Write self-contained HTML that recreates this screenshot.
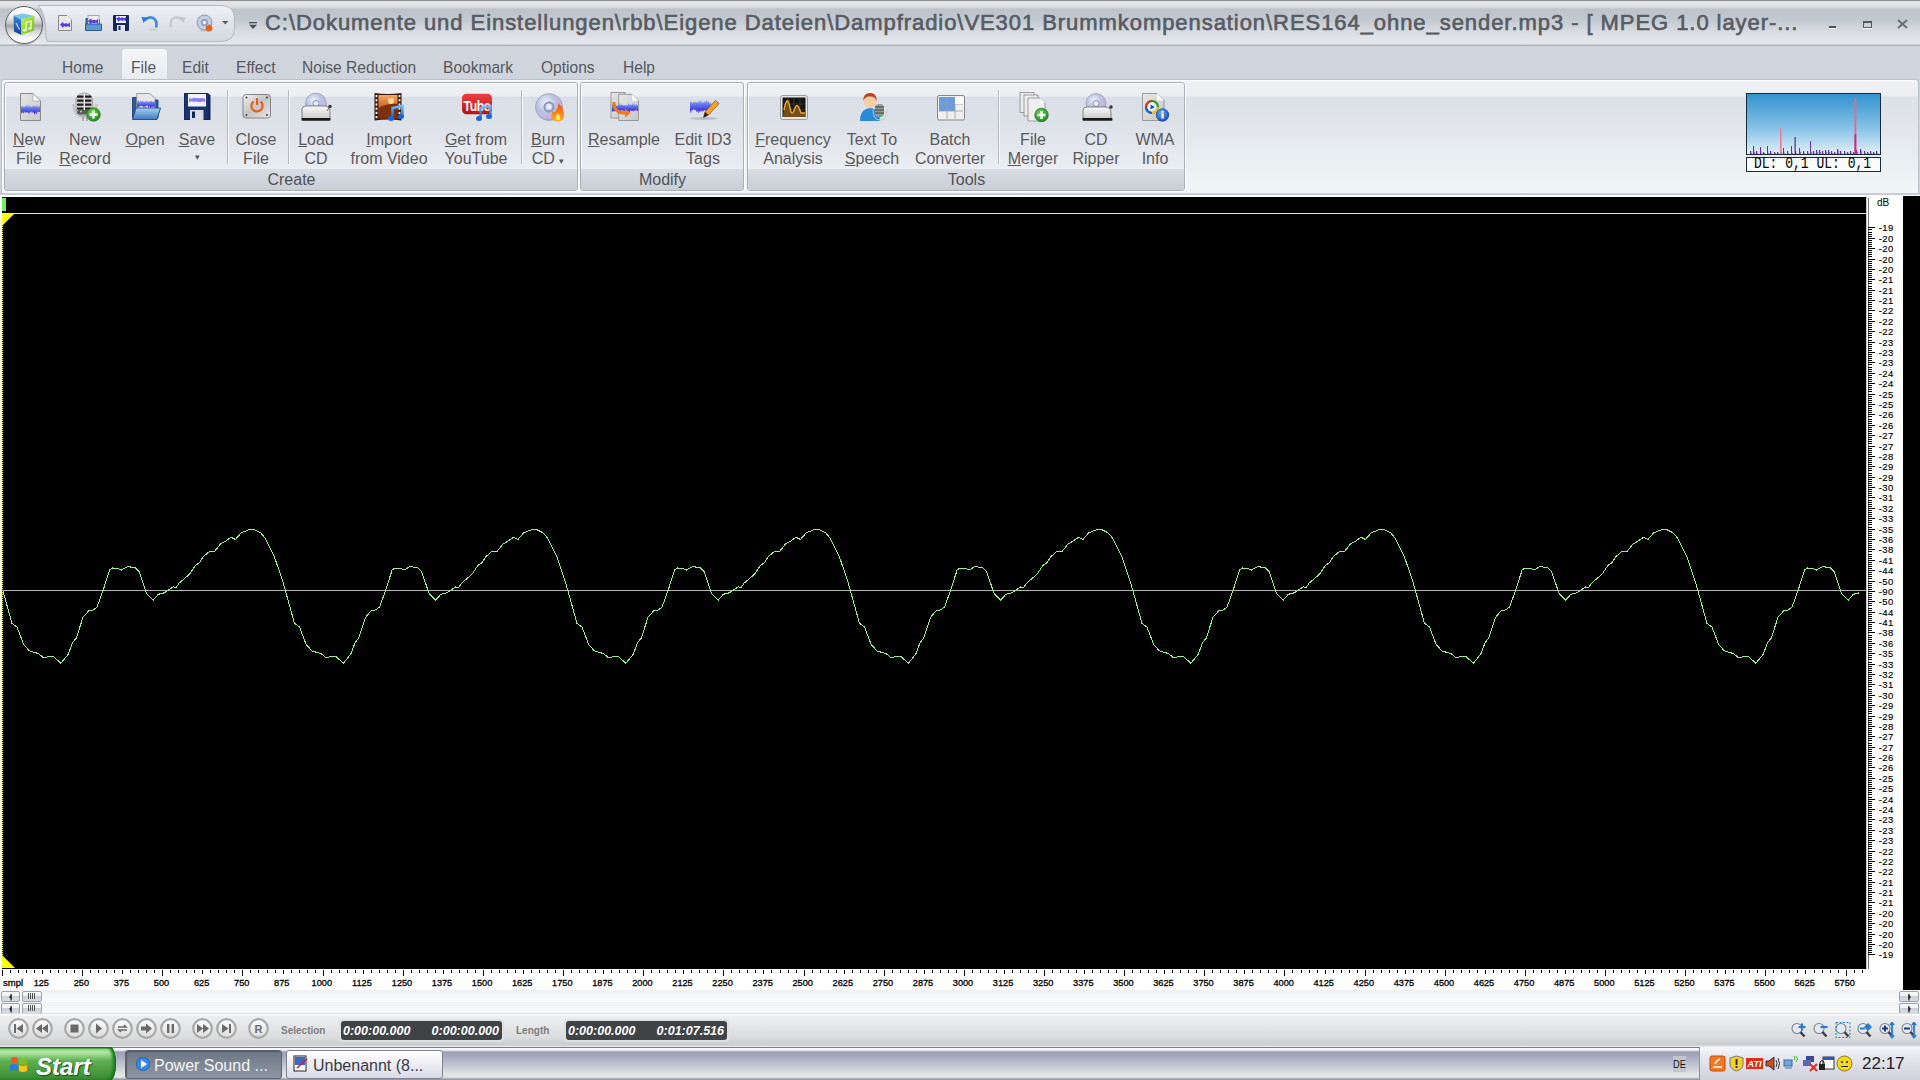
<!DOCTYPE html><html><head><meta charset="utf-8"><style>
*{margin:0;padding:0;box-sizing:border-box}
html,body{width:1920px;height:1080px;overflow:hidden;background:#d0d4dc;font-family:"Liberation Sans",sans-serif}
.a{position:absolute}
.t{position:absolute;white-space:nowrap;color:#4a4a4a}
.btn{position:absolute;text-align:center;color:#5a5a5a;font-size:16px;line-height:19px;white-space:nowrap}
.ic{position:absolute;width:32px;height:32px}
u{text-decoration:underline;text-underline-offset:1px;text-decoration-thickness:1px}
</style></head><body>
<div class="a" style="left:0;top:0;width:1920px;height:46px;background:linear-gradient(#8a8d92 0,#8a8d92 1px,#dcdee1 1px,#e5e6e9 2px,#dcdde1 7px,#d2d4d8 8px,#bcc3cb 9px,#c3c9d1 20px,#d6dae0 30px,#e6e9ee 44px,#aeb3ba 45px,#aeb3ba 46px)"></div>
<svg class="a" style="left:0;top:0" width="240" height="46" viewBox="0 0 240 46"><defs><linearGradient id="qg" x1="0" y1="0" x2="0" y2="1"><stop offset="0" stop-color="#eef1f4"/><stop offset="0.6" stop-color="#dde1e7"/><stop offset="1" stop-color="#d3d8df"/></linearGradient></defs><path d="M38 5.5 H221 Q234.5 5.5 234.5 19 V28 Q234.5 41.5 221 41.5 H48.5 Q46 41.5 46 36 Q46 12 38 5.5Z" fill="url(#qg)" stroke="#b3b9c1" stroke-width="1"/></svg>
<div class="a" style="left:5px;top:6px;width:38px;height:38px;border-radius:50%;background:linear-gradient(#ffffff 0,#f2f2f2 25%,#c8c8c8 45%,#a4a4a4 52%,#d4d4d4 66%,#f6f6f6 85%,#ffffff 100%);border:1.5px solid #5e6166;box-shadow:0 1px 1px rgba(0,0,0,0.2)"></div>
<svg class="a" style="left:12px;top:12px" width="24" height="25" viewBox="0 0 24 25"><defs><linearGradient id="cg" x1="0" y1="0" x2="1" y2="1"><stop offset="0" stop-color="#c8f050"/><stop offset="1" stop-color="#6ac01a"/></linearGradient><linearGradient id="cb" x1="0" y1="0" x2="0" y2="1"><stop offset="0" stop-color="#3a8ad8"/><stop offset="1" stop-color="#1a3aa0"/></linearGradient></defs><path d="M1.5 3.5 L11 1.5 L22.5 4 L9 7.5Z" fill="#7ac8e8"/><path d="M1.5 3.5 L9 7.5 L9.5 23 L2 19.5Z" fill="url(#cb)"/><path d="M9 7.5 L22.5 4 L22 18.5 L9.5 23Z" fill="url(#cg)"/><path d="M14 10.5 L19 9 V16" stroke="#f0ffe0" stroke-width="1.3" fill="none"/><path d="M14 10.5 V17.5" stroke="#f0ffe0" stroke-width="1.3"/><ellipse cx="12.8" cy="18.2" rx="1.8" ry="1.2" fill="#f0ffe0"/><ellipse cx="17.8" cy="16.6" rx="1.8" ry="1.2" fill="#f0ffe0"/><path d="M4 11 L7.5 17.5" stroke="#cde0ff" stroke-width="1.1"/></svg>
<svg class="a" style="left:57px;top:15px" width="16" height="16" viewBox="0 0 16 16"><path d="M1.5 0.5 H10 L14.5 5 V15.5 H1.5Z" fill="#e8e8e8" stroke="#8a8a8a"/><path d="M10 0.5 V5 H14.5Z" fill="#fff"/><g transform="translate(0 1.5)"><path d="M3 8 L6 5.5 L7 7.5 L9 6.5 L11 7.5 L13 6 V11 L11 9.5 L9 10.5 L7 9.5 L6 11.5Z" fill="#5a3ae8"/></g></svg>
<svg class="a" style="left:85px;top:15px" width="17" height="16" viewBox="0 0 17 16"><path d="M0.5 3 H5 L6 4.5 H15 V15.5 H0.5Z" fill="#2a5a9a"/><rect x="3" y="0.5" width="11" height="10" fill="#eee" stroke="#999" stroke-width="0.8"/><g transform="translate(0 -2)"><path d="M3 8 L6 5.5 L7 7.5 L9 6.5 L11 7.5 L13 6 V11 L11 9.5 L9 10.5 L7 9.5 L6 11.5Z" fill="#5a3ae8"/></g><path d="M0.5 15.5 V9 H16.5 V15.5Z" fill="#5a9ad0" stroke="#1a4a8a" stroke-width="0.8"/></svg>
<svg class="a" style="left:113px;top:15px" width="16" height="16" viewBox="0 0 16 16"><rect x="0" y="0" width="16" height="16" rx="1" fill="#14285e"/><rect x="3" y="1" width="10" height="7" fill="#eef0f8"/><g transform="translate(0 -3.5) scale(1 0.9)"><path d="M3 8 L6 5.5 L7 7.5 L9 6.5 L11 7.5 L13 6 V11 L11 9.5 L9 10.5 L7 9.5 L6 11.5Z" fill="#5a3ae8"/></g><rect x="4" y="10" width="8" height="6" fill="#e0e4ea"/><rect x="5.5" y="11" width="2" height="4" fill="#14285e"/></svg>
<svg class="a" style="left:141px;top:14px" width="17" height="17" viewBox="0 0 17 17"><path d="M4 6 Q9 1.5 13.5 5 Q16.5 8 15 13.5" stroke="#3a8ae0" stroke-width="2.6" fill="none"/><path d="M0.5 3 L7 3.5 L2.5 9Z" fill="#2a7ad8"/><ellipse cx="12" cy="15.5" rx="4" ry="0.8" fill="#999" opacity="0.4"/></svg>
<svg class="a" style="left:169px;top:14px" width="17" height="17" viewBox="0 0 17 17"><path d="M13 6 Q8 1.5 3.5 5 Q0.5 8 2 13.5" stroke="#c8ccd2" stroke-width="2.6" fill="none"/><path d="M16.5 3 L10 3.5 L14.5 9Z" fill="#c4c8ce"/></svg>
<svg class="a" style="left:196px;top:14px" width="18" height="18" viewBox="0 0 18 18"><circle cx="8.5" cy="8.5" r="7.5" fill="#c6cde2" stroke="#7a86a6" stroke-width="0.8"/><circle cx="8.5" cy="8.5" r="2.8" fill="none" stroke="#8a98c0" stroke-width="1.4"/><circle cx="8.5" cy="8.5" r="1.3" fill="#fff"/><path d="M10.5 17 Q9 13 11 11 Q12.5 12.5 13 10 Q16 11.5 16.5 14 Q16.5 17.5 13 17.5Z" fill="#f05a14"/><ellipse cx="9" cy="16.8" rx="6" ry="0.8" fill="#888" opacity="0.35"/></svg>
<svg class="a" style="left:222px;top:21px" width="7" height="4" viewBox="0 0 7 4"><path d="M0 0 H6.5 L3.25 3.5Z" fill="#5a5e66"/></svg>
<svg class="a" style="left:249px;top:22px" width="8" height="8" viewBox="0 0 8 8"><rect x="0" y="0" width="8" height="1.3" fill="#4e5258"/><path d="M0 2.8 H8 L4 7Z" fill="#4e5258"/></svg>
<div class="t" style="left:265px;top:12px;font-size:22px;line-height:22px;color:#585c63;letter-spacing:0.94px;-webkit-text-stroke:0.65px #585c63">C:\Dokumente und Einstellungen\rbb\Eigene Dateien\Dampfradio\VE301 Brummkompensation\RES164_ohne_sender.mp3 - [ MPEG 1.0 layer-...</div>
<div class="a" style="left:1829px;top:26px;width:7px;height:2px;background:#4f545b;box-shadow:0 1px 0 #fff"></div>
<div class="a" style="left:1863px;top:21px;width:9px;height:7px;border:1px solid #555a61;border-top-width:2px;box-shadow:0 1px 0 #fff"></div>
<svg class="a" style="left:1897px;top:19px" width="11" height="10" viewBox="0 0 11 10"><path d="M1 1 L10 9 M10 1 L1 9" stroke="#6a7078" stroke-width="2"/></svg>
<div class="a" style="left:121px;top:48px;width:47px;height:33px;border-radius:4px 4px 0 0;background:linear-gradient(#f3f5f7,#e8ebef);border:1px solid #c6d6de;border-bottom:none"></div>
<div class="t" style="left:62px;top:58px;font-size:17px;color:#55595f;transform:scaleX(0.915);transform-origin:0 0">Home</div>
<div class="t" style="left:131px;top:58px;font-size:17px;color:#55595f;transform:scaleX(0.915);transform-origin:0 0">File</div>
<div class="t" style="left:182px;top:58px;font-size:17px;color:#55595f;transform:scaleX(0.915);transform-origin:0 0">Edit</div>
<div class="t" style="left:236px;top:58px;font-size:17px;color:#55595f;transform:scaleX(0.915);transform-origin:0 0">Effect</div>
<div class="t" style="left:302px;top:58px;font-size:17px;color:#55595f;transform:scaleX(0.915);transform-origin:0 0">Noise Reduction</div>
<div class="t" style="left:443px;top:58px;font-size:17px;color:#55595f;transform:scaleX(0.915);transform-origin:0 0">Bookmark</div>
<div class="t" style="left:541px;top:58px;font-size:17px;color:#55595f;transform:scaleX(0.915);transform-origin:0 0">Options</div>
<div class="t" style="left:623px;top:58px;font-size:17px;color:#55595f;transform:scaleX(0.915);transform-origin:0 0">Help</div>
<div class="a" style="left:1px;top:79px;width:1918px;height:114px;border-radius:4px 4px 0 0;background:linear-gradient(#f4f6f8 0,#eef0f4 3px,#eceef2 16px,#dde1e8 17px,#e3e7ec 50px,#ecf1f4 90px,#f1f7f9 113px);border:1px solid #bcc1c8;border-bottom:none;box-shadow:inset 1px 1px 0 #fbfcfd"></div>
<div class="a" style="left:0;top:193px;width:1920px;height:3px;background:#c9cdd3"></div>
<div class="a" style="left:0;top:195px;width:1920px;height:2px;background:#ffffff"></div>
<div class="a" style="left:4px;top:82px;width:574px;height:109px;border-radius:3px;border:1px solid #aab0b8;background:linear-gradient(#eff1f4 0,#eceef2 13px,#dadee6 14px,#dde1e8 40px,#e6e9ee 70px,#eaedf1 86px);box-shadow:0 1px 0 #fff, 1px 0 0 #fff, inset 1px 1px 0 #fbfcfd"></div>
<div class="a" style="left:5px;top:169px;width:572px;height:21px;background:linear-gradient(#d8dce3,#c9ced7);border-radius:0 0 2px 2px"></div>
<div class="t" style="left:5px;width:573px;top:171px;text-align:center;font-size:16px;color:#4e5258">Create</div>
<div class="a" style="left:580px;top:82px;width:164px;height:109px;border-radius:3px;border:1px solid #aab0b8;background:linear-gradient(#eff1f4 0,#eceef2 13px,#dadee6 14px,#dde1e8 40px,#e6e9ee 70px,#eaedf1 86px);box-shadow:0 1px 0 #fff, 1px 0 0 #fff, inset 1px 1px 0 #fbfcfd"></div>
<div class="a" style="left:581px;top:169px;width:162px;height:21px;background:linear-gradient(#d8dce3,#c9ced7);border-radius:0 0 2px 2px"></div>
<div class="t" style="left:581px;width:163px;top:171px;text-align:center;font-size:16px;color:#4e5258">Modify</div>
<div class="a" style="left:747px;top:82px;width:438px;height:109px;border-radius:3px;border:1px solid #aab0b8;background:linear-gradient(#eff1f4 0,#eceef2 13px,#dadee6 14px,#dde1e8 40px,#e6e9ee 70px,#eaedf1 86px);box-shadow:0 1px 0 #fff, 1px 0 0 #fff, inset 1px 1px 0 #fbfcfd"></div>
<div class="a" style="left:748px;top:169px;width:436px;height:21px;background:linear-gradient(#d8dce3,#c9ced7);border-radius:0 0 2px 2px"></div>
<div class="t" style="left:748px;width:437px;top:171px;text-align:center;font-size:16px;color:#4e5258">Tools</div>
<div class="a" style="left:227px;top:90px;width:1px;height:74px;background:#b6bbc3;box-shadow:1px 0 0 #f6f7f9"></div>
<div class="a" style="left:288px;top:90px;width:1px;height:74px;background:#b6bbc3;box-shadow:1px 0 0 #f6f7f9"></div>
<div class="a" style="left:521px;top:90px;width:1px;height:74px;background:#b6bbc3;box-shadow:1px 0 0 #f6f7f9"></div>
<div class="a" style="left:998px;top:90px;width:1px;height:74px;background:#b6bbc3;box-shadow:1px 0 0 #f6f7f9"></div>
<div class="btn" style="left:-31px;width:120px;top:130px"><u>N</u>ew<br>File</div>
<div class="btn" style="left:25px;width:120px;top:130px">New<br><u>R</u>ecord</div>
<div class="btn" style="left:85px;width:120px;top:130px"><u>O</u>pen<br></div>
<div class="btn" style="left:137px;width:120px;top:130px"><u>S</u>ave<br><span style='font-size:9px;position:relative;top:-4px'>&#9662;</span></div>
<div class="btn" style="left:196px;width:120px;top:130px">Close<br>File</div>
<div class="btn" style="left:256px;width:120px;top:130px"><u>L</u>oad<br>CD</div>
<div class="btn" style="left:329px;width:120px;top:130px"><u>I</u>mport<br>from Video</div>
<div class="btn" style="left:416px;width:120px;top:130px"><u>G</u>et from<br>YouTube</div>
<div class="btn" style="left:488px;width:120px;top:130px"><u>B</u>urn<br>CD <span style='font-size:9px'>&#9662;</span></div>
<div class="btn" style="left:564px;width:120px;top:130px"><u>R</u>esample<br></div>
<div class="btn" style="left:643px;width:120px;top:130px">Edit ID3<br>Tags</div>
<div class="btn" style="left:733px;width:120px;top:130px"><u>F</u>requency<br>Analysis</div>
<div class="btn" style="left:812px;width:120px;top:130px">Text To<br><u>S</u>peech</div>
<div class="btn" style="left:890px;width:120px;top:130px">Batch<br>Converter</div>
<div class="btn" style="left:973px;width:120px;top:130px">File<br><u>M</u>erger</div>
<div class="btn" style="left:1036px;width:120px;top:130px">CD<br>Ripper</div>
<div class="btn" style="left:1095px;width:120px;top:130px">WMA<br>Info</div>
<svg class="a" style="left:0;top:80px" width="1200" height="50" viewBox="0 80 1200 50"><defs>
<linearGradient id="wg" x1="0" y1="0" x2="0" y2="1"><stop offset="0" stop-color="#9ab8f4"/><stop offset="0.45" stop-color="#5a6ae8"/><stop offset="1" stop-color="#3a10d0"/></linearGradient>
<linearGradient id="wg2" x1="0" y1="0" x2="1" y2="0"><stop offset="0" stop-color="#7a8ef0"/><stop offset="1" stop-color="#9a70f0"/></linearGradient>
<linearGradient id="pg" x1="0" y1="0" x2="1" y2="1"><stop offset="0" stop-color="#e6e6e6"/><stop offset="1" stop-color="#c8c8c8"/></linearGradient>
<linearGradient id="metal" x1="0" y1="0" x2="1" y2="1"><stop offset="0" stop-color="#f4f4f4"/><stop offset="0.5" stop-color="#c4c4c4"/><stop offset="1" stop-color="#e8e8e8"/></linearGradient>
<linearGradient id="fold" x1="0" y1="0" x2="0" y2="1"><stop offset="0" stop-color="#a8d0f0"/><stop offset="1" stop-color="#3e7cc0"/></linearGradient>
<radialGradient id="cd" cx="0.4" cy="0.35" r="0.7"><stop offset="0" stop-color="#f0f4ff"/><stop offset="0.5" stop-color="#b8c4e0"/><stop offset="0.8" stop-color="#c8b0e0"/><stop offset="1" stop-color="#8a9ab8"/></radialGradient>
<linearGradient id="drv" x1="0" y1="0" x2="0" y2="1"><stop offset="0" stop-color="#fafafa"/><stop offset="1" stop-color="#c8c8c8"/></linearGradient>
<linearGradient id="film" x1="0" y1="0" x2="0" y2="1"><stop offset="0" stop-color="#f0a868"/><stop offset="0.45" stop-color="#d86a28"/><stop offset="1" stop-color="#6a2a10"/></linearGradient>
<linearGradient id="note" x1="0" y1="0" x2="0" y2="1"><stop offset="0" stop-color="#6ac0ff"/><stop offset="1" stop-color="#1a5ad0"/></linearGradient>
<linearGradient id="yt" x1="0" y1="0" x2="0" y2="1"><stop offset="0" stop-color="#f04040"/><stop offset="1" stop-color="#b81010"/></linearGradient>
<radialGradient id="grn" cx="0.4" cy="0.35" r="0.7"><stop offset="0" stop-color="#6ad050"/><stop offset="1" stop-color="#1a8a1a"/></radialGradient>
<radialGradient id="blu" cx="0.4" cy="0.35" r="0.7"><stop offset="0" stop-color="#6aa8f0"/><stop offset="1" stop-color="#1a4ab8"/></radialGradient>
<linearGradient id="flame" x1="0" y1="0" x2="0" y2="1"><stop offset="0" stop-color="#f04a10"/><stop offset="1" stop-color="#ffb020"/></linearGradient>
</defs><path d="M20.5 93.5 H33 L40.5 101 V120.5 H20.5Z" fill="url(#pg)" stroke="#8a8a8a"/><path d="M33 93.5 V101 H40.5Z" fill="#f8f8f8" stroke="#9a9a9a" stroke-width="0.6"/><polygon points="21.0,105.8 21.9,106.8 22.8,105.2 23.7,107.6 24.6,106.6 25.5,106.5 26.4,104.6 27.3,106.5 28.2,104.7 29.1,106.7 30.0,105.2 31.0,106.9 31.9,106.5 32.8,106.6 33.7,104.9 34.6,106.4 35.5,105.4 36.4,106.8 37.3,104.7 38.2,107.5 39.1,104.9 40.0,106.8 40.0,112.6 39.1,111.6 38.2,112.1 37.3,111.4 36.4,114.5 35.5,112.5 34.6,114.8 33.7,112.3 32.8,112.9 31.9,111.1 31.0,113.0 30.0,111.4 29.1,114.0 28.2,112.6 27.3,112.5 26.4,111.9 25.5,112.9 24.6,111.3 23.7,113.7 22.8,111.4 21.9,113.7 21.0,112.3" fill="url(#wg)"/><path d="M73.5 104 Q73.5 117 85 117 Q96.5 117 96.5 104" stroke="#c4c4c4" stroke-width="2.2" fill="none"/><rect x="82" y="116" width="2" height="5" fill="#aaa"/><rect x="86" y="116" width="2" height="5" fill="#aaa"/><rect x="76" y="93" width="16.5" height="22.5" rx="7.5" fill="#d0d0d0" stroke="#777" stroke-width="0.6"/><rect x="77" y="95.5" width="14.5" height="2.2" rx="1" fill="#1e1e1e"/><rect x="77" y="99.5" width="14.5" height="2.2" rx="1" fill="#1e1e1e"/><rect x="77" y="103.5" width="14.5" height="2.2" rx="1" fill="#1e1e1e"/><rect x="77" y="107.5" width="14.5" height="2.2" rx="1" fill="#1e1e1e"/><rect x="83.6" y="94" width="1.4" height="20" fill="#f4f4f4"/><rect x="77" y="110" width="14.5" height="4.5" rx="2" fill="#5a5a5a"/><circle cx="81" cy="111.5" r="1" fill="#8af07a"/><circle cx="93.5" cy="114.5" r="6.8" fill="url(#grn)" stroke="#1a6a1a" stroke-width="0.6"/><path d="M93.5 110.5 V118.5 M89.5 114.5 H97.5" stroke="#fff" stroke-width="2.4"/><path d="M132.5 97.5 H139 L141 100 H158 V118 H132.5Z" fill="#2a5a9a" stroke="#1a3a6a" stroke-width="0.8"/><path d="M136.7 93.5 H150 L155 98.5 V113 H136.7Z" fill="#e6e6e6" stroke="#8a8a8a" stroke-width="0.8"/><polygon points="137.0,99.9 137.9,101.4 138.8,100.2 139.7,102.4 140.6,100.3 141.5,101.6 142.4,100.7 143.3,101.5 144.2,101.6 145.1,102.0 146.0,100.4 146.9,101.9 147.8,100.7 148.7,102.2 149.6,101.1 150.5,101.1 151.4,101.0 152.3,101.8 153.2,101.6 154.1,101.9 155.0,100.0 155.0,105.7 154.1,107.7 153.2,106.1 152.3,107.4 151.4,106.5 150.5,108.4 149.6,105.9 148.7,107.9 147.8,105.5 146.9,106.0 146.0,105.6 145.1,108.1 144.2,105.9 143.3,107.6 142.4,105.8 141.5,106.1 140.6,105.8 139.7,106.7 138.8,106.3 137.9,108.3 137.0,106.5" fill="url(#wg)"/><path d="M132.5 119.5 L136 108 H160.5 L157 119.5Z" fill="url(#fold)" stroke="#1a4a8a" stroke-width="0.9"/><path d="M184 93 H208 L210.5 95.5 V120 H184Z" fill="#14285e"/><rect x="185" y="94" width="23" height="25" fill="#1e3a7a" opacity="0.6"/><rect x="188" y="94" width="18" height="12.5" fill="#f2f2f8"/><polygon points="189.0,97.4 189.9,98.6 190.9,98.5 191.8,98.5 192.8,97.8 193.7,98.7 194.6,97.1 195.6,98.2 196.5,98.1 197.5,98.6 198.4,97.8 199.4,98.5 200.3,98.2 201.2,98.2 202.2,97.8 203.1,98.7 204.1,98.3 205.0,98.7 205.0,102.7 204.1,101.4 203.1,101.6 202.2,101.1 201.2,102.8 200.3,101.4 199.4,102.5 198.4,101.4 197.5,102.5 196.5,101.1 195.6,101.7 194.6,101.5 193.7,102.0 192.8,101.4 191.8,101.3 190.9,101.3 189.9,102.8 189.0,101.5" fill="url(#wg2)"/><rect x="190" y="110" width="13.5" height="10" fill="#d8dce4"/><rect x="192" y="111.5" width="3" height="6.5" fill="#14285e"/><rect x="243" y="94.5" width="27.5" height="23.5" rx="3" fill="url(#metal)" stroke="#7a7a7a" stroke-width="0.9"/><circle cx="246.5" cy="97.5" r="0.9" fill="#333"/><circle cx="267" cy="97.5" r="0.9" fill="#333"/><circle cx="246.5" cy="115" r="0.9" fill="#333"/><circle cx="267" cy="115" r="0.9" fill="#333"/><path d="M253.5 101.5 A5.6 5.6 0 1 0 260.5 101.5" stroke="#e0621a" stroke-width="2.2" fill="none"/><rect x="255.9" y="98" width="2.2" height="7" fill="#e0621a"/><circle cx="316" cy="103.5" r="10.5" fill="url(#cd)" stroke="#8a92aa" stroke-width="0.6"/><circle cx="316" cy="103.5" r="3" fill="#e8ecf4" stroke="#8a92b0"/><path d="M302 109 Q302 106 306 106 H324 Q330 106 330 112 V119 H302Z" fill="url(#drv)" stroke="#6a6a6a" stroke-width="0.8"/><rect x="301.5" y="118" width="29" height="2.8" rx="1" fill="#1a1a1a"/><circle cx="330" cy="106.5" r="1.7" fill="#333"/><path d="M330 106.5 L327 111" stroke="#555" stroke-width="0.8"/><path d="M374.5 93 Q388 95 401.5 93 V120.5 Q388 118.5 374.5 120.5Z" fill="#3a1a0a"/><rect x="378.5" y="95" width="19" height="23.5" fill="url(#film)"/><path d="M378.5 108 Q388 103 397.5 104 V118.5 H378.5Z" fill="#7a3210"/><circle cx="391" cy="101" r="3" fill="#ffe0a0" opacity="0.9"/><rect x="375.6" y="95.0" width="1.8" height="2.2" fill="#f0f0f0"/><rect x="398.6" y="95.0" width="1.8" height="2.2" fill="#f0f0f0"/><rect x="375.6" y="99.2" width="1.8" height="2.2" fill="#f0f0f0"/><rect x="398.6" y="99.2" width="1.8" height="2.2" fill="#f0f0f0"/><rect x="375.6" y="103.4" width="1.8" height="2.2" fill="#f0f0f0"/><rect x="398.6" y="103.4" width="1.8" height="2.2" fill="#f0f0f0"/><rect x="375.6" y="107.6" width="1.8" height="2.2" fill="#f0f0f0"/><rect x="398.6" y="107.6" width="1.8" height="2.2" fill="#f0f0f0"/><rect x="375.6" y="111.8" width="1.8" height="2.2" fill="#f0f0f0"/><rect x="398.6" y="111.8" width="1.8" height="2.2" fill="#f0f0f0"/><rect x="375.6" y="116.0" width="1.8" height="2.2" fill="#f0f0f0"/><rect x="398.6" y="116.0" width="1.8" height="2.2" fill="#f0f0f0"/><path d="M392.5 118 V108 L402.5 106 V116" stroke="url(#note)" stroke-width="2.4" fill="none"/><ellipse cx="391.0" cy="118.5" rx="3" ry="2.5" fill="#1a66d8"/><ellipse cx="401.0" cy="116.5" rx="3" ry="2.5" fill="#1a66d8"/><rect x="462" y="93.8" width="30" height="20.5" rx="4.5" fill="url(#yt)"/><text x="463.5" y="111" font-family="Liberation Sans" font-weight="bold" font-size="15" fill="#fff" transform="translate(463.5 0) scale(0.82 1) translate(-463.5 0)" letter-spacing="-0.5">Tube</text><path d="M480.5 118 V108 L490.5 106 V116" stroke="url(#note)" stroke-width="2.4" fill="none"/><ellipse cx="479.0" cy="118.5" rx="3" ry="2.5" fill="#1a66d8"/><ellipse cx="489.0" cy="116.5" rx="3" ry="2.5" fill="#1a66d8"/><circle cx="549" cy="107" r="13.5" fill="url(#cd)" stroke="#8a92aa" stroke-width="0.6"/><circle cx="549" cy="107" r="4.5" fill="none" stroke="#8a98c0" stroke-width="2"/><circle cx="549" cy="107" r="2.2" fill="#e8ecf4"/><path d="M553 120.5 Q550 115 553 111 Q555 114 556 110 Q559 107 558 103 Q564 108 564 115 Q564 121 558 121.5Z" fill="url(#flame)"/><path d="M556 120 Q555 116 558 113 Q561 117 560 120Z" fill="#ffe060"/><rect x="611" y="92.5" width="14" height="25.5" fill="url(#pg)" stroke="#8a8a8a" stroke-width="0.8"/><path d="M618.7 94.3 H632 L638.5 100.8 V120.5 H618.7Z" fill="url(#pg)" stroke="#8a8a8a" stroke-width="0.8"/><path d="M632 94.3 V100.8 H638.5Z" fill="#fafafa"/><polygon points="612.0,103.6 612.9,104.7 613.9,103.9 614.8,105.8 615.7,104.1 616.6,106.1 617.6,105.4 618.5,105.3 619.4,102.7 620.4,105.0 621.3,104.6 622.2,105.1 623.1,104.7 624.1,105.9 625.0,104.4 625.9,105.7 626.9,104.5 627.8,105.6 628.7,102.8 629.6,104.9 630.6,104.2 631.5,105.3 632.4,103.0 633.4,105.0 634.3,103.0 635.2,106.1 636.1,103.7 637.1,105.1 638.0,105.3 638.0,110.4 637.1,111.1 636.1,110.0 635.2,110.6 634.3,110.6 633.4,111.4 632.4,110.4 631.5,110.9 630.6,110.3 629.6,112.4 628.7,110.9 627.8,110.9 626.9,110.2 625.9,111.6 625.0,110.6 624.1,111.6 623.1,110.2 622.2,110.8 621.3,110.1 620.4,112.2 619.4,110.9 618.5,110.4 617.6,110.4 616.6,110.7 615.7,110.5 614.8,111.6 613.9,110.5 612.9,111.9 612.0,110.8" fill="url(#wg)"/><path d="M614 102 Q613 113 626 113" stroke="#f07a1a" stroke-width="3.2" fill="none"/><path d="M625 108.5 L630.5 113 L625 117.5Z" fill="#f07a1a"/><ellipse cx="704" cy="118.5" rx="14" ry="1.5" fill="#777" opacity="0.35"/><polygon points="690.0,101.1 690.9,102.2 691.8,102.1 692.7,103.5 693.7,100.9 694.6,103.1 695.5,101.8 696.4,102.1 697.3,102.3 698.2,103.0 699.1,99.5 700.0,102.4 701.0,99.9 701.9,103.6 702.8,101.3 703.7,102.7 704.6,101.1 705.5,102.6 706.4,99.2 707.3,102.0 708.3,101.0 709.2,103.7 710.1,101.6 711.0,103.3 711.0,111.6 710.1,109.1 709.2,111.6 708.3,110.0 707.3,112.5 706.4,110.6 705.5,110.8 704.6,110.0 703.7,111.5 702.8,110.0 701.9,112.2 701.0,109.9 700.0,112.5 699.1,110.5 698.2,113.8 697.3,109.8 696.4,112.3 695.5,109.7 694.6,110.3 693.7,108.9 692.7,110.4 691.8,109.5 690.9,113.5 690.0,110.6" fill="url(#wg)"/><path d="M703.5 117.5 L705 112 L715.5 100.5 L719 103.5 L708.5 115Z" fill="#f2a628" stroke="#a05010" stroke-width="0.8"/><path d="M703.5 117.5 L705 112 L708.5 115Z" fill="#222"/><rect x="780.5" y="95.5" width="27" height="24" rx="2" fill="#e6e6e6" stroke="#8a8a8a" stroke-width="0.8"/><rect x="782.5" y="97.5" width="23" height="19.5" fill="#141414"/><path d="M782.5 104 H805.5 M782.5 110 H805.5 M788 97.5 V117 M794 97.5 V117 M800 97.5 V117" stroke="#4a4a3a" stroke-width="0.6"/><path d="M782.5 117 L784 110 Q786 99 788 101 Q790 106 791 112 Q793 115 795 108 Q797 103 799 108 L801 113 H805.5 V117Z" fill="#8a5a1a" opacity="0.8"/><path d="M784 110 Q786 99 788 101 Q790 106 791 112 Q793 115 795 108 Q797 103 799 108 L801 113 L805 113" stroke="#f0a830" stroke-width="1.4" fill="none"/><path d="M860 121 Q860 109 870 108 Q880 109 880 121Z" fill="#2a8ad8"/><circle cx="870" cy="102" r="6" fill="#f6cfa0"/><path d="M863.5 101 Q863 93 870 93 Q877 93 876.5 101 Q875 96 870 96.5 Q865 96 863.5 101Z" fill="#b8401a"/><rect x="875" y="104" width="9" height="13" rx="4" fill="#9a9a9a"/><path d="M875 107 H884 M875 110 H884 M875 113 H884" stroke="#333" stroke-width="0.9"/><circle cx="880" cy="116" r="1.4" fill="#3ad03a"/><path d="M873 110 Q873 120 880 120 Q887 120 887 110" stroke="#ccc" fill="none"/><rect x="937.5" y="95.5" width="27" height="24.5" rx="1.5" fill="#f0f0f0" stroke="#7a7a7a" stroke-width="0.9"/><rect x="939" y="97" width="16" height="14" fill="#6a9ae0"/><path d="M939 104 H963 M939 111 H963 M947 97 V119 M955 97 V119" stroke="#9aa0a8" stroke-width="0.8"/><path d="M955 97 H963 V104 H955Z" fill="#fafafa"/><rect x="1020" y="92.5" width="14" height="20" fill="#ececec" stroke="#8a8a8a" stroke-width="0.8"/><rect x="1024" y="95" width="14" height="21" fill="#ececec" stroke="#8a8a8a" stroke-width="0.8"/><path d="M1028 98 H1040 L1045 103 V121 H1028Z" fill="#efefef" stroke="#8a8a8a" stroke-width="0.8"/><path d="M1040 98 V103 H1045Z" fill="#fff"/><circle cx="1041.5" cy="115" r="6.8" fill="url(#grn)" stroke="#1a6a1a" stroke-width="0.6"/><path d="M1041.5 111 V119 M1037.5 115 H1045.5" stroke="#fff" stroke-width="2.4"/><circle cx="1096" cy="103.5" r="10" fill="url(#cd)" stroke="#8a92aa" stroke-width="0.6"/><circle cx="1096" cy="103.5" r="3" fill="#e8ecf4" stroke="#8a92b0"/><path d="M1083 110 Q1083 107 1087 107 H1105 Q1111 107 1111 113 V119 H1083Z" fill="url(#drv)" stroke="#6a6a6a" stroke-width="0.8"/><rect x="1082.5" y="118" width="30" height="2.8" rx="1" fill="#1a1a1a"/><circle cx="1111" cy="107" r="1.7" fill="#333"/><path d="M1142.5 93.5 H1157 L1164 100.5 V120.5 H1142.5Z" fill="url(#pg)" stroke="#8a8a8a" stroke-width="0.8"/><path d="M1157 93.5 V100.5 H1164Z" fill="#fafafa"/><circle cx="1152" cy="107" r="6" fill="none" stroke="#2a9a2a" stroke-width="2.2"/><path d="M1146 107 A6 6 0 0 1 1152 101" stroke="#e03020" stroke-width="2.2" fill="none"/><path d="M1152 113 A6 6 0 0 1 1146 107" stroke="#2a5ad0" stroke-width="2.2" fill="none"/><path d="M1158 107 A6 6 0 0 1 1152 113" stroke="#f0c020" stroke-width="2.2" fill="none"/><circle cx="1152" cy="107" r="4" fill="#fff"/><path d="M1150.5 104.5 L1155 107 L1150.5 109.5Z" fill="#1a4ac0"/><circle cx="1162.5" cy="115" r="6.3" fill="url(#blu)" stroke="#103a90" stroke-width="0.6"/><rect x="1161.5" y="113.5" width="2.2" height="5" fill="#fff"/><rect x="1161.5" y="110.8" width="2.2" height="2" fill="#fff"/></svg>
<div class="a" style="left:1746px;top:93px;width:135px;height:62px;border:1px solid #1b2a38;background:linear-gradient(#3394cf,#8cc5e8 60%,#e2f0f8)"></div>
<svg class="a" style="left:1747px;top:94px" width="133" height="60" viewBox="0 0 133 60"><rect x="3" y="57" width="1.2" height="3" fill="#6a2aa8"/><rect x="4.2" y="59" width="1" height="1" fill="#9a50d0"/><rect x="6" y="56" width="1.2" height="4" fill="#6a2aa8"/><rect x="7.2" y="58" width="1" height="2" fill="#9a50d0"/><rect x="6" y="52" width="1" height="8" fill="#6a2aa8"/><rect x="9" y="57" width="1.2" height="3" fill="#6a2aa8"/><rect x="10.2" y="59" width="1" height="1" fill="#9a50d0"/><rect x="13" y="57" width="1.2" height="3" fill="#6a2aa8"/><rect x="14.2" y="59" width="1" height="1" fill="#9a50d0"/><rect x="13" y="53" width="1" height="7" fill="#6a2aa8"/><rect x="16" y="58" width="1.2" height="2" fill="#6a2aa8"/><rect x="17.2" y="59" width="1" height="1" fill="#9a50d0"/><rect x="20" y="57" width="1.2" height="3" fill="#6a2aa8"/><rect x="21.2" y="59" width="1" height="1" fill="#9a50d0"/><rect x="20" y="52" width="1" height="8" fill="#6a2aa8"/><rect x="23" y="57" width="1.2" height="3" fill="#6a2aa8"/><rect x="24.2" y="59" width="1" height="1" fill="#9a50d0"/><rect x="27" y="58" width="1.2" height="2" fill="#6a2aa8"/><rect x="28.2" y="59" width="1" height="1" fill="#9a50d0"/><rect x="30" y="58" width="1.2" height="2" fill="#6a2aa8"/><rect x="31.2" y="59" width="1" height="1" fill="#9a50d0"/><rect x="33" y="56" width="1.2" height="4" fill="#6a2aa8"/><rect x="34.2" y="58" width="1" height="2" fill="#9a50d0"/><rect x="36" y="57" width="1.2" height="3" fill="#6a2aa8"/><rect x="37.2" y="59" width="1" height="1" fill="#9a50d0"/><rect x="36" y="54" width="1" height="6" fill="#6a2aa8"/><rect x="40" y="57" width="1.2" height="3" fill="#6a2aa8"/><rect x="41.2" y="59" width="1" height="1" fill="#9a50d0"/><rect x="44" y="57" width="1.2" height="3" fill="#6a2aa8"/><rect x="45.2" y="59" width="1" height="1" fill="#9a50d0"/><rect x="44" y="52" width="1" height="8" fill="#6a2aa8"/><rect x="48" y="57" width="1.2" height="3" fill="#6a2aa8"/><rect x="49.2" y="59" width="1" height="1" fill="#9a50d0"/><rect x="52" y="56" width="1.2" height="4" fill="#6a2aa8"/><rect x="53.2" y="58" width="1" height="2" fill="#9a50d0"/><rect x="52" y="54" width="1" height="6" fill="#6a2aa8"/><rect x="56" y="57" width="1.2" height="3" fill="#6a2aa8"/><rect x="57.2" y="59" width="1" height="1" fill="#9a50d0"/><rect x="60" y="57" width="1.2" height="3" fill="#6a2aa8"/><rect x="61.2" y="59" width="1" height="1" fill="#9a50d0"/><rect x="63" y="56" width="1.2" height="4" fill="#6a2aa8"/><rect x="64.2" y="58" width="1" height="2" fill="#9a50d0"/><rect x="66" y="57" width="1.2" height="3" fill="#6a2aa8"/><rect x="67.2" y="59" width="1" height="1" fill="#9a50d0"/><rect x="69" y="56" width="1.2" height="4" fill="#6a2aa8"/><rect x="70.2" y="58" width="1" height="2" fill="#9a50d0"/><rect x="72" y="56" width="1.2" height="4" fill="#6a2aa8"/><rect x="73.2" y="58" width="1" height="2" fill="#9a50d0"/><rect x="75" y="57" width="1.2" height="3" fill="#6a2aa8"/><rect x="76.2" y="59" width="1" height="1" fill="#9a50d0"/><rect x="78" y="56" width="1.2" height="4" fill="#6a2aa8"/><rect x="79.2" y="58" width="1" height="2" fill="#9a50d0"/><rect x="81" y="56" width="1.2" height="4" fill="#6a2aa8"/><rect x="82.2" y="58" width="1" height="2" fill="#9a50d0"/><rect x="84" y="57" width="1.2" height="3" fill="#6a2aa8"/><rect x="85.2" y="59" width="1" height="1" fill="#9a50d0"/><rect x="87" y="58" width="1.2" height="2" fill="#6a2aa8"/><rect x="88.2" y="59" width="1" height="1" fill="#9a50d0"/><rect x="90" y="55" width="1.2" height="5" fill="#6a2aa8"/><rect x="91.2" y="57" width="1" height="3" fill="#9a50d0"/><rect x="93" y="57" width="1.2" height="3" fill="#6a2aa8"/><rect x="94.2" y="59" width="1" height="1" fill="#9a50d0"/><rect x="97" y="57" width="1.2" height="3" fill="#6a2aa8"/><rect x="98.2" y="59" width="1" height="1" fill="#9a50d0"/><rect x="100" y="58" width="1.2" height="2" fill="#6a2aa8"/><rect x="101.2" y="59" width="1" height="1" fill="#9a50d0"/><rect x="103" y="57" width="1.2" height="3" fill="#6a2aa8"/><rect x="104.2" y="59" width="1" height="1" fill="#9a50d0"/><rect x="106" y="58" width="1.2" height="2" fill="#6a2aa8"/><rect x="107.2" y="59" width="1" height="1" fill="#9a50d0"/><rect x="109" y="56" width="1.2" height="4" fill="#6a2aa8"/><rect x="110.2" y="58" width="1" height="2" fill="#9a50d0"/><rect x="113" y="55" width="1.2" height="5" fill="#6a2aa8"/><rect x="114.2" y="57" width="1" height="3" fill="#9a50d0"/><rect x="117" y="57" width="1.2" height="3" fill="#6a2aa8"/><rect x="118.2" y="59" width="1" height="1" fill="#9a50d0"/><rect x="120" y="58" width="1.2" height="2" fill="#6a2aa8"/><rect x="121.2" y="59" width="1" height="1" fill="#9a50d0"/><rect x="123" y="57" width="1.2" height="3" fill="#6a2aa8"/><rect x="124.2" y="59" width="1" height="1" fill="#9a50d0"/><rect x="126" y="58" width="1.2" height="2" fill="#6a2aa8"/><rect x="127.2" y="59" width="1" height="1" fill="#9a50d0"/><rect x="129" y="57" width="1.2" height="3" fill="#6a2aa8"/><rect x="130.2" y="59" width="1" height="1" fill="#9a50d0"/><rect x="33" y="34" width="1.6" height="26" fill="#f07a9a"/><rect x="47.5" y="43" width="1.2" height="17" fill="#5a2a7a"/><rect x="63" y="47" width="1" height="13" fill="#6a34b0"/><rect x="107.5" y="4" width="1.8" height="56" fill="#e86a8a"/><rect x="107.5" y="40" width="1.8" height="20" fill="#c02a8a"/></svg>
<div class="a" style="left:1746px;top:157px;width:135px;height:15px;border:1px solid #1b2a38;background:#fafcfc"></div>
<div class="t" style="left:1754px;top:154px;font-family:'Liberation Mono',monospace;font-size:17px;line-height:20px;color:#000;transform:scaleX(0.765);transform-origin:0 0">DL: 0,1 UL: 0,1</div><div class="a" style="left:0;top:196px;width:1920px;height:773px;background:#fff"></div>
<div class="a" style="left:2px;top:197px;width:1865px;height:772px;background:#000"></div>
<div class="a" style="left:2px;top:198px;width:4px;height:13px;background:#6cf05a"></div>
<div class="a" style="left:2px;top:213px;width:1865px;height:1px;background:#e8e8e8"></div>
<svg class="a" style="left:0;top:196px" width="1920" height="773" viewBox="0 196 1920 773"><path d="M2 214 H14 L2 226Z" fill="#ffff00"/><path d="M2 968 V955 L15 968Z" fill="#ffff00"/><line x1="2.5" y1="226" x2="2.5" y2="955" stroke="#ffff00" stroke-width="1" stroke-dasharray="1 1"/><line x1="2" y1="590.5" x2="1866" y2="590.5" stroke="#b4b4b4" stroke-width="1"/><polyline points="3.0,591.0 11.9,623.2 17.0,627.0 23.7,644.7 29.6,651.0 38.5,653.6 43.0,657.3 53.4,656.5 60.8,663.2 68.2,654.3 72.6,642.5 76.3,638.0 83.0,617.3 88.9,610.6 93.4,609.9 97.1,606.9 103.0,590.6 109.7,569.8 112.6,568.0 118.6,568.7 121.5,570.0 127.5,566.6 134.9,567.6 139.3,572.0 146.0,592.0 147.2,594.3 153.2,600.2 158.3,594.3 164.3,592.8 173.2,586.9 176.1,587.6 179.1,583.2 185.0,578.0 189.5,574.3 195.4,565.4 199.8,562.4 202.8,557.2 208.7,552.0 214.7,551.3 220.6,543.9 225.8,541.0 231.0,537.2 235.4,539.5 241.3,532.8 248.7,529.8 254.7,529.8 260.6,532.8 265.0,538.0 268.0,543.9 274.0,555.8 278.4,568.4 282.8,581.7 285.5,591.0 294.4,623.2 299.5,627.0 306.2,644.7 312.1,651.0 321.0,653.6 325.5,657.3 335.9,656.5 343.3,663.2 350.7,654.3 355.1,642.5 358.8,638.0 365.5,617.3 371.4,610.6 375.9,609.9 379.6,606.9 385.5,590.6 392.2,569.8 395.1,568.0 401.1,568.7 404.0,570.0 410.0,566.6 417.4,567.6 421.8,572.0 428.5,592.0 429.7,594.3 435.7,600.2 440.8,594.3 446.8,592.8 455.7,586.9 458.6,587.6 461.6,583.2 467.5,578.0 472.0,574.3 477.9,565.4 482.3,562.4 485.3,557.2 491.2,552.0 497.2,551.3 503.1,543.9 508.3,541.0 513.5,537.2 517.9,539.5 523.8,532.8 531.2,529.8 537.2,529.8 543.1,532.8 547.5,538.0 550.5,543.9 556.5,555.8 560.9,568.4 565.3,581.7 568.0,591.0 576.9,623.2 582.0,627.0 588.7,644.7 594.6,651.0 603.5,653.6 608.0,657.3 618.4,656.5 625.8,663.2 633.2,654.3 637.6,642.5 641.3,638.0 648.0,617.3 653.9,610.6 658.4,609.9 662.1,606.9 668.0,590.6 674.7,569.8 677.6,568.0 683.6,568.7 686.5,570.0 692.5,566.6 699.9,567.6 704.3,572.0 711.0,592.0 712.2,594.3 718.2,600.2 723.3,594.3 729.3,592.8 738.2,586.9 741.1,587.6 744.1,583.2 750.0,578.0 754.5,574.3 760.4,565.4 764.8,562.4 767.8,557.2 773.7,552.0 779.7,551.3 785.6,543.9 790.8,541.0 796.0,537.2 800.4,539.5 806.3,532.8 813.7,529.8 819.7,529.8 825.6,532.8 830.0,538.0 833.0,543.9 839.0,555.8 843.4,568.4 847.8,581.7 850.5,591.0 859.4,623.2 864.5,627.0 871.2,644.7 877.1,651.0 886.0,653.6 890.5,657.3 900.9,656.5 908.3,663.2 915.7,654.3 920.1,642.5 923.8,638.0 930.5,617.3 936.4,610.6 940.9,609.9 944.6,606.9 950.5,590.6 957.2,569.8 960.1,568.0 966.1,568.7 969.0,570.0 975.0,566.6 982.4,567.6 986.8,572.0 993.5,592.0 994.7,594.3 1000.7,600.2 1005.8,594.3 1011.8,592.8 1020.7,586.9 1023.6,587.6 1026.6,583.2 1032.5,578.0 1037.0,574.3 1042.9,565.4 1047.3,562.4 1050.3,557.2 1056.2,552.0 1062.2,551.3 1068.1,543.9 1073.3,541.0 1078.5,537.2 1082.9,539.5 1088.8,532.8 1096.2,529.8 1102.2,529.8 1108.1,532.8 1112.5,538.0 1115.5,543.9 1121.5,555.8 1125.9,568.4 1130.3,581.7 1133.0,591.0 1141.9,623.2 1147.0,627.0 1153.7,644.7 1159.6,651.0 1168.5,653.6 1173.0,657.3 1183.4,656.5 1190.8,663.2 1198.2,654.3 1202.6,642.5 1206.3,638.0 1213.0,617.3 1218.9,610.6 1223.4,609.9 1227.1,606.9 1233.0,590.6 1239.7,569.8 1242.6,568.0 1248.6,568.7 1251.5,570.0 1257.5,566.6 1264.9,567.6 1269.3,572.0 1276.0,592.0 1277.2,594.3 1283.2,600.2 1288.3,594.3 1294.3,592.8 1303.2,586.9 1306.1,587.6 1309.1,583.2 1315.0,578.0 1319.5,574.3 1325.4,565.4 1329.8,562.4 1332.8,557.2 1338.7,552.0 1344.7,551.3 1350.6,543.9 1355.8,541.0 1361.0,537.2 1365.4,539.5 1371.3,532.8 1378.7,529.8 1384.7,529.8 1390.6,532.8 1395.0,538.0 1398.0,543.9 1404.0,555.8 1408.4,568.4 1412.8,581.7 1415.5,591.0 1424.4,623.2 1429.5,627.0 1436.2,644.7 1442.1,651.0 1451.0,653.6 1455.5,657.3 1465.9,656.5 1473.3,663.2 1480.7,654.3 1485.1,642.5 1488.8,638.0 1495.5,617.3 1501.4,610.6 1505.9,609.9 1509.6,606.9 1515.5,590.6 1522.2,569.8 1525.1,568.0 1531.1,568.7 1534.0,570.0 1540.0,566.6 1547.4,567.6 1551.8,572.0 1558.5,592.0 1559.7,594.3 1565.7,600.2 1570.8,594.3 1576.8,592.8 1585.7,586.9 1588.6,587.6 1591.6,583.2 1597.5,578.0 1602.0,574.3 1607.9,565.4 1612.3,562.4 1615.3,557.2 1621.2,552.0 1627.2,551.3 1633.1,543.9 1638.3,541.0 1643.5,537.2 1647.9,539.5 1653.8,532.8 1661.2,529.8 1667.2,529.8 1673.1,532.8 1677.5,538.0 1680.5,543.9 1686.5,555.8 1690.9,568.4 1695.3,581.7 1698.0,591.0 1706.9,623.2 1712.0,627.0 1718.7,644.7 1724.6,651.0 1733.5,653.6 1738.0,657.3 1748.4,656.5 1755.8,663.2 1763.2,654.3 1767.6,642.5 1771.3,638.0 1778.0,617.3 1783.9,610.6 1788.4,609.9 1792.1,606.9 1798.0,590.6 1804.7,569.8 1807.6,568.0 1813.6,568.7 1816.5,570.0 1822.5,566.6 1829.9,567.6 1834.3,572.0 1841.0,592.0 1842.2,594.3 1848.2,600.2 1853.3,594.3 1859.3,592.8" fill="none" stroke="#98f088" stroke-width="1" shape-rendering="crispEdges"/></svg>
<svg class="a" style="left:1866px;top:196px" width="37" height="773" viewBox="1866 196 37 773"><rect x="1868" y="198" width="1" height="771" fill="#7a7a7a"/><rect x="1866" y="196" width="1" height="773" fill="#c8c8c8"/><rect x="1868" y="227" width="7" height="1" fill="#000"/><rect x="1868" y="229" width="4" height="1" fill="#000"/><rect x="1868" y="232" width="4" height="1" fill="#000"/><rect x="1868" y="234" width="4" height="1" fill="#000"/><rect x="1868" y="236" width="4" height="1" fill="#000"/><text x="1893.5" y="231" font-size="9.5" text-anchor="end" font-family="Liberation Sans" fill="#000" stroke="#000" stroke-width="0.15" letter-spacing="0.3">-19</text><rect x="1868" y="238" width="7" height="1" fill="#000"/><rect x="1868" y="240" width="4" height="1" fill="#000"/><rect x="1868" y="242" width="4" height="1" fill="#000"/><rect x="1868" y="244" width="4" height="1" fill="#000"/><rect x="1868" y="246" width="4" height="1" fill="#000"/><text x="1893.5" y="242" font-size="9.5" text-anchor="end" font-family="Liberation Sans" fill="#000" stroke="#000" stroke-width="0.15" letter-spacing="0.3">-20</text><rect x="1868" y="248" width="7" height="1" fill="#000"/><rect x="1868" y="250" width="4" height="1" fill="#000"/><rect x="1868" y="252" width="4" height="1" fill="#000"/><rect x="1868" y="254" width="4" height="1" fill="#000"/><rect x="1868" y="256" width="4" height="1" fill="#000"/><text x="1893.5" y="252" font-size="9.5" text-anchor="end" font-family="Liberation Sans" fill="#000" stroke="#000" stroke-width="0.15" letter-spacing="0.3">-20</text><rect x="1868" y="259" width="7" height="1" fill="#000"/><rect x="1868" y="261" width="4" height="1" fill="#000"/><rect x="1868" y="263" width="4" height="1" fill="#000"/><rect x="1868" y="265" width="4" height="1" fill="#000"/><rect x="1868" y="267" width="4" height="1" fill="#000"/><text x="1893.5" y="263" font-size="9.5" text-anchor="end" font-family="Liberation Sans" fill="#000" stroke="#000" stroke-width="0.15" letter-spacing="0.3">-20</text><rect x="1868" y="269" width="7" height="1" fill="#000"/><rect x="1868" y="271" width="4" height="1" fill="#000"/><rect x="1868" y="273" width="4" height="1" fill="#000"/><rect x="1868" y="275" width="4" height="1" fill="#000"/><rect x="1868" y="277" width="4" height="1" fill="#000"/><text x="1893.5" y="273" font-size="9.5" text-anchor="end" font-family="Liberation Sans" fill="#000" stroke="#000" stroke-width="0.15" letter-spacing="0.3">-20</text><rect x="1868" y="279" width="7" height="1" fill="#000"/><rect x="1868" y="281" width="4" height="1" fill="#000"/><rect x="1868" y="283" width="4" height="1" fill="#000"/><rect x="1868" y="286" width="4" height="1" fill="#000"/><rect x="1868" y="288" width="4" height="1" fill="#000"/><text x="1893.5" y="283" font-size="9.5" text-anchor="end" font-family="Liberation Sans" fill="#000" stroke="#000" stroke-width="0.15" letter-spacing="0.3">-21</text><rect x="1868" y="290" width="7" height="1" fill="#000"/><rect x="1868" y="292" width="4" height="1" fill="#000"/><rect x="1868" y="294" width="4" height="1" fill="#000"/><rect x="1868" y="296" width="4" height="1" fill="#000"/><rect x="1868" y="298" width="4" height="1" fill="#000"/><text x="1893.5" y="294" font-size="9.5" text-anchor="end" font-family="Liberation Sans" fill="#000" stroke="#000" stroke-width="0.15" letter-spacing="0.3">-21</text><rect x="1868" y="300" width="7" height="1" fill="#000"/><rect x="1868" y="302" width="4" height="1" fill="#000"/><rect x="1868" y="304" width="4" height="1" fill="#000"/><rect x="1868" y="306" width="4" height="1" fill="#000"/><rect x="1868" y="308" width="4" height="1" fill="#000"/><text x="1893.5" y="304" font-size="9.5" text-anchor="end" font-family="Liberation Sans" fill="#000" stroke="#000" stroke-width="0.15" letter-spacing="0.3">-21</text><rect x="1868" y="310" width="7" height="1" fill="#000"/><rect x="1868" y="313" width="4" height="1" fill="#000"/><rect x="1868" y="315" width="4" height="1" fill="#000"/><rect x="1868" y="317" width="4" height="1" fill="#000"/><rect x="1868" y="319" width="4" height="1" fill="#000"/><text x="1893.5" y="314" font-size="9.5" text-anchor="end" font-family="Liberation Sans" fill="#000" stroke="#000" stroke-width="0.15" letter-spacing="0.3">-22</text><rect x="1868" y="321" width="7" height="1" fill="#000"/><rect x="1868" y="323" width="4" height="1" fill="#000"/><rect x="1868" y="325" width="4" height="1" fill="#000"/><rect x="1868" y="327" width="4" height="1" fill="#000"/><rect x="1868" y="329" width="4" height="1" fill="#000"/><text x="1893.5" y="325" font-size="9.5" text-anchor="end" font-family="Liberation Sans" fill="#000" stroke="#000" stroke-width="0.15" letter-spacing="0.3">-22</text><rect x="1868" y="331" width="7" height="1" fill="#000"/><rect x="1868" y="333" width="4" height="1" fill="#000"/><rect x="1868" y="335" width="4" height="1" fill="#000"/><rect x="1868" y="337" width="4" height="1" fill="#000"/><rect x="1868" y="340" width="4" height="1" fill="#000"/><text x="1893.5" y="335" font-size="9.5" text-anchor="end" font-family="Liberation Sans" fill="#000" stroke="#000" stroke-width="0.15" letter-spacing="0.3">-22</text><rect x="1868" y="342" width="7" height="1" fill="#000"/><rect x="1868" y="344" width="4" height="1" fill="#000"/><rect x="1868" y="346" width="4" height="1" fill="#000"/><rect x="1868" y="348" width="4" height="1" fill="#000"/><rect x="1868" y="350" width="4" height="1" fill="#000"/><text x="1893.5" y="346" font-size="9.5" text-anchor="end" font-family="Liberation Sans" fill="#000" stroke="#000" stroke-width="0.15" letter-spacing="0.3">-23</text><rect x="1868" y="352" width="7" height="1" fill="#000"/><rect x="1868" y="354" width="4" height="1" fill="#000"/><rect x="1868" y="356" width="4" height="1" fill="#000"/><rect x="1868" y="358" width="4" height="1" fill="#000"/><rect x="1868" y="360" width="4" height="1" fill="#000"/><text x="1893.5" y="356" font-size="9.5" text-anchor="end" font-family="Liberation Sans" fill="#000" stroke="#000" stroke-width="0.15" letter-spacing="0.3">-23</text><rect x="1868" y="362" width="7" height="1" fill="#000"/><rect x="1868" y="364" width="4" height="1" fill="#000"/><rect x="1868" y="367" width="4" height="1" fill="#000"/><rect x="1868" y="369" width="4" height="1" fill="#000"/><rect x="1868" y="371" width="4" height="1" fill="#000"/><text x="1893.5" y="366" font-size="9.5" text-anchor="end" font-family="Liberation Sans" fill="#000" stroke="#000" stroke-width="0.15" letter-spacing="0.3">-23</text><rect x="1868" y="373" width="7" height="1" fill="#000"/><rect x="1868" y="375" width="4" height="1" fill="#000"/><rect x="1868" y="377" width="4" height="1" fill="#000"/><rect x="1868" y="379" width="4" height="1" fill="#000"/><rect x="1868" y="381" width="4" height="1" fill="#000"/><text x="1893.5" y="377" font-size="9.5" text-anchor="end" font-family="Liberation Sans" fill="#000" stroke="#000" stroke-width="0.15" letter-spacing="0.3">-24</text><rect x="1868" y="383" width="7" height="1" fill="#000"/><rect x="1868" y="385" width="4" height="1" fill="#000"/><rect x="1868" y="387" width="4" height="1" fill="#000"/><rect x="1868" y="389" width="4" height="1" fill="#000"/><rect x="1868" y="391" width="4" height="1" fill="#000"/><text x="1893.5" y="387" font-size="9.5" text-anchor="end" font-family="Liberation Sans" fill="#000" stroke="#000" stroke-width="0.15" letter-spacing="0.3">-24</text><rect x="1868" y="394" width="7" height="1" fill="#000"/><rect x="1868" y="396" width="4" height="1" fill="#000"/><rect x="1868" y="398" width="4" height="1" fill="#000"/><rect x="1868" y="400" width="4" height="1" fill="#000"/><rect x="1868" y="402" width="4" height="1" fill="#000"/><text x="1893.5" y="398" font-size="9.5" text-anchor="end" font-family="Liberation Sans" fill="#000" stroke="#000" stroke-width="0.15" letter-spacing="0.3">-25</text><rect x="1868" y="404" width="7" height="1" fill="#000"/><rect x="1868" y="406" width="4" height="1" fill="#000"/><rect x="1868" y="408" width="4" height="1" fill="#000"/><rect x="1868" y="410" width="4" height="1" fill="#000"/><rect x="1868" y="412" width="4" height="1" fill="#000"/><text x="1893.5" y="408" font-size="9.5" text-anchor="end" font-family="Liberation Sans" fill="#000" stroke="#000" stroke-width="0.15" letter-spacing="0.3">-25</text><rect x="1868" y="414" width="7" height="1" fill="#000"/><rect x="1868" y="416" width="4" height="1" fill="#000"/><rect x="1868" y="419" width="4" height="1" fill="#000"/><rect x="1868" y="421" width="4" height="1" fill="#000"/><rect x="1868" y="423" width="4" height="1" fill="#000"/><text x="1893.5" y="418" font-size="9.5" text-anchor="end" font-family="Liberation Sans" fill="#000" stroke="#000" stroke-width="0.15" letter-spacing="0.3">-26</text><rect x="1868" y="425" width="7" height="1" fill="#000"/><rect x="1868" y="427" width="4" height="1" fill="#000"/><rect x="1868" y="429" width="4" height="1" fill="#000"/><rect x="1868" y="431" width="4" height="1" fill="#000"/><rect x="1868" y="433" width="4" height="1" fill="#000"/><text x="1893.5" y="429" font-size="9.5" text-anchor="end" font-family="Liberation Sans" fill="#000" stroke="#000" stroke-width="0.15" letter-spacing="0.3">-26</text><rect x="1868" y="435" width="7" height="1" fill="#000"/><rect x="1868" y="437" width="4" height="1" fill="#000"/><rect x="1868" y="439" width="4" height="1" fill="#000"/><rect x="1868" y="441" width="4" height="1" fill="#000"/><rect x="1868" y="443" width="4" height="1" fill="#000"/><text x="1893.5" y="439" font-size="9.5" text-anchor="end" font-family="Liberation Sans" fill="#000" stroke="#000" stroke-width="0.15" letter-spacing="0.3">-27</text><rect x="1868" y="446" width="7" height="1" fill="#000"/><rect x="1868" y="448" width="4" height="1" fill="#000"/><rect x="1868" y="450" width="4" height="1" fill="#000"/><rect x="1868" y="452" width="4" height="1" fill="#000"/><rect x="1868" y="454" width="4" height="1" fill="#000"/><text x="1893.5" y="450" font-size="9.5" text-anchor="end" font-family="Liberation Sans" fill="#000" stroke="#000" stroke-width="0.15" letter-spacing="0.3">-27</text><rect x="1868" y="456" width="7" height="1" fill="#000"/><rect x="1868" y="458" width="4" height="1" fill="#000"/><rect x="1868" y="460" width="4" height="1" fill="#000"/><rect x="1868" y="462" width="4" height="1" fill="#000"/><rect x="1868" y="464" width="4" height="1" fill="#000"/><text x="1893.5" y="460" font-size="9.5" text-anchor="end" font-family="Liberation Sans" fill="#000" stroke="#000" stroke-width="0.15" letter-spacing="0.3">-28</text><rect x="1868" y="466" width="7" height="1" fill="#000"/><rect x="1868" y="468" width="4" height="1" fill="#000"/><rect x="1868" y="470" width="4" height="1" fill="#000"/><rect x="1868" y="473" width="4" height="1" fill="#000"/><rect x="1868" y="475" width="4" height="1" fill="#000"/><text x="1893.5" y="470" font-size="9.5" text-anchor="end" font-family="Liberation Sans" fill="#000" stroke="#000" stroke-width="0.15" letter-spacing="0.3">-29</text><rect x="1868" y="477" width="7" height="1" fill="#000"/><rect x="1868" y="479" width="4" height="1" fill="#000"/><rect x="1868" y="481" width="4" height="1" fill="#000"/><rect x="1868" y="483" width="4" height="1" fill="#000"/><rect x="1868" y="485" width="4" height="1" fill="#000"/><text x="1893.5" y="481" font-size="9.5" text-anchor="end" font-family="Liberation Sans" fill="#000" stroke="#000" stroke-width="0.15" letter-spacing="0.3">-29</text><rect x="1868" y="487" width="7" height="1" fill="#000"/><rect x="1868" y="489" width="4" height="1" fill="#000"/><rect x="1868" y="491" width="4" height="1" fill="#000"/><rect x="1868" y="493" width="4" height="1" fill="#000"/><rect x="1868" y="495" width="4" height="1" fill="#000"/><text x="1893.5" y="491" font-size="9.5" text-anchor="end" font-family="Liberation Sans" fill="#000" stroke="#000" stroke-width="0.15" letter-spacing="0.3">-30</text><rect x="1868" y="497" width="7" height="1" fill="#000"/><rect x="1868" y="500" width="4" height="1" fill="#000"/><rect x="1868" y="502" width="4" height="1" fill="#000"/><rect x="1868" y="504" width="4" height="1" fill="#000"/><rect x="1868" y="506" width="4" height="1" fill="#000"/><text x="1893.5" y="501" font-size="9.5" text-anchor="end" font-family="Liberation Sans" fill="#000" stroke="#000" stroke-width="0.15" letter-spacing="0.3">-31</text><rect x="1868" y="508" width="7" height="1" fill="#000"/><rect x="1868" y="510" width="4" height="1" fill="#000"/><rect x="1868" y="512" width="4" height="1" fill="#000"/><rect x="1868" y="514" width="4" height="1" fill="#000"/><rect x="1868" y="516" width="4" height="1" fill="#000"/><text x="1893.5" y="512" font-size="9.5" text-anchor="end" font-family="Liberation Sans" fill="#000" stroke="#000" stroke-width="0.15" letter-spacing="0.3">-32</text><rect x="1868" y="518" width="7" height="1" fill="#000"/><rect x="1868" y="520" width="4" height="1" fill="#000"/><rect x="1868" y="522" width="4" height="1" fill="#000"/><rect x="1868" y="524" width="4" height="1" fill="#000"/><rect x="1868" y="527" width="4" height="1" fill="#000"/><text x="1893.5" y="522" font-size="9.5" text-anchor="end" font-family="Liberation Sans" fill="#000" stroke="#000" stroke-width="0.15" letter-spacing="0.3">-33</text><rect x="1868" y="529" width="7" height="1" fill="#000"/><rect x="1868" y="531" width="4" height="1" fill="#000"/><rect x="1868" y="533" width="4" height="1" fill="#000"/><rect x="1868" y="535" width="4" height="1" fill="#000"/><rect x="1868" y="537" width="4" height="1" fill="#000"/><text x="1893.5" y="533" font-size="9.5" text-anchor="end" font-family="Liberation Sans" fill="#000" stroke="#000" stroke-width="0.15" letter-spacing="0.3">-35</text><rect x="1868" y="539" width="7" height="1" fill="#000"/><rect x="1868" y="541" width="4" height="1" fill="#000"/><rect x="1868" y="543" width="4" height="1" fill="#000"/><rect x="1868" y="545" width="4" height="1" fill="#000"/><rect x="1868" y="547" width="4" height="1" fill="#000"/><text x="1893.5" y="543" font-size="9.5" text-anchor="end" font-family="Liberation Sans" fill="#000" stroke="#000" stroke-width="0.15" letter-spacing="0.3">-36</text><rect x="1868" y="549" width="7" height="1" fill="#000"/><rect x="1868" y="551" width="4" height="1" fill="#000"/><rect x="1868" y="554" width="4" height="1" fill="#000"/><rect x="1868" y="556" width="4" height="1" fill="#000"/><rect x="1868" y="558" width="4" height="1" fill="#000"/><text x="1893.5" y="553" font-size="9.5" text-anchor="end" font-family="Liberation Sans" fill="#000" stroke="#000" stroke-width="0.15" letter-spacing="0.3">-38</text><rect x="1868" y="560" width="7" height="1" fill="#000"/><rect x="1868" y="562" width="4" height="1" fill="#000"/><rect x="1868" y="564" width="4" height="1" fill="#000"/><rect x="1868" y="566" width="4" height="1" fill="#000"/><rect x="1868" y="568" width="4" height="1" fill="#000"/><text x="1893.5" y="564" font-size="9.5" text-anchor="end" font-family="Liberation Sans" fill="#000" stroke="#000" stroke-width="0.15" letter-spacing="0.3">-41</text><rect x="1868" y="570" width="7" height="1" fill="#000"/><rect x="1868" y="572" width="4" height="1" fill="#000"/><rect x="1868" y="574" width="4" height="1" fill="#000"/><rect x="1868" y="576" width="4" height="1" fill="#000"/><rect x="1868" y="578" width="4" height="1" fill="#000"/><text x="1893.5" y="574" font-size="9.5" text-anchor="end" font-family="Liberation Sans" fill="#000" stroke="#000" stroke-width="0.15" letter-spacing="0.3">-44</text><rect x="1868" y="581" width="7" height="1" fill="#000"/><rect x="1868" y="583" width="4" height="1" fill="#000"/><rect x="1868" y="585" width="4" height="1" fill="#000"/><rect x="1868" y="587" width="4" height="1" fill="#000"/><rect x="1868" y="589" width="4" height="1" fill="#000"/><text x="1893.5" y="585" font-size="9.5" text-anchor="end" font-family="Liberation Sans" fill="#000" stroke="#000" stroke-width="0.15" letter-spacing="0.3">-50</text><rect x="1868" y="591" width="7" height="1" fill="#000"/><rect x="1868" y="593" width="4" height="1" fill="#000"/><rect x="1868" y="595" width="4" height="1" fill="#000"/><rect x="1868" y="597" width="4" height="1" fill="#000"/><rect x="1868" y="599" width="4" height="1" fill="#000"/><text x="1893.5" y="595" font-size="9.5" text-anchor="end" font-family="Liberation Sans" fill="#000" stroke="#000" stroke-width="0.15" letter-spacing="0.3">-90</text><rect x="1868" y="601" width="7" height="1" fill="#000"/><rect x="1868" y="603" width="4" height="1" fill="#000"/><rect x="1868" y="605" width="4" height="1" fill="#000"/><rect x="1868" y="608" width="4" height="1" fill="#000"/><rect x="1868" y="610" width="4" height="1" fill="#000"/><text x="1893.5" y="605" font-size="9.5" text-anchor="end" font-family="Liberation Sans" fill="#000" stroke="#000" stroke-width="0.15" letter-spacing="0.3">-50</text><rect x="1868" y="612" width="7" height="1" fill="#000"/><rect x="1868" y="614" width="4" height="1" fill="#000"/><rect x="1868" y="616" width="4" height="1" fill="#000"/><rect x="1868" y="618" width="4" height="1" fill="#000"/><rect x="1868" y="620" width="4" height="1" fill="#000"/><text x="1893.5" y="616" font-size="9.5" text-anchor="end" font-family="Liberation Sans" fill="#000" stroke="#000" stroke-width="0.15" letter-spacing="0.3">-44</text><rect x="1868" y="622" width="7" height="1" fill="#000"/><rect x="1868" y="624" width="4" height="1" fill="#000"/><rect x="1868" y="626" width="4" height="1" fill="#000"/><rect x="1868" y="628" width="4" height="1" fill="#000"/><rect x="1868" y="630" width="4" height="1" fill="#000"/><text x="1893.5" y="626" font-size="9.5" text-anchor="end" font-family="Liberation Sans" fill="#000" stroke="#000" stroke-width="0.15" letter-spacing="0.3">-41</text><rect x="1868" y="632" width="7" height="1" fill="#000"/><rect x="1868" y="635" width="4" height="1" fill="#000"/><rect x="1868" y="637" width="4" height="1" fill="#000"/><rect x="1868" y="639" width="4" height="1" fill="#000"/><rect x="1868" y="641" width="4" height="1" fill="#000"/><text x="1893.5" y="636" font-size="9.5" text-anchor="end" font-family="Liberation Sans" fill="#000" stroke="#000" stroke-width="0.15" letter-spacing="0.3">-38</text><rect x="1868" y="643" width="7" height="1" fill="#000"/><rect x="1868" y="645" width="4" height="1" fill="#000"/><rect x="1868" y="647" width="4" height="1" fill="#000"/><rect x="1868" y="649" width="4" height="1" fill="#000"/><rect x="1868" y="651" width="4" height="1" fill="#000"/><text x="1893.5" y="647" font-size="9.5" text-anchor="end" font-family="Liberation Sans" fill="#000" stroke="#000" stroke-width="0.15" letter-spacing="0.3">-36</text><rect x="1868" y="653" width="7" height="1" fill="#000"/><rect x="1868" y="655" width="4" height="1" fill="#000"/><rect x="1868" y="657" width="4" height="1" fill="#000"/><rect x="1868" y="659" width="4" height="1" fill="#000"/><rect x="1868" y="662" width="4" height="1" fill="#000"/><text x="1893.5" y="657" font-size="9.5" text-anchor="end" font-family="Liberation Sans" fill="#000" stroke="#000" stroke-width="0.15" letter-spacing="0.3">-35</text><rect x="1868" y="664" width="7" height="1" fill="#000"/><rect x="1868" y="666" width="4" height="1" fill="#000"/><rect x="1868" y="668" width="4" height="1" fill="#000"/><rect x="1868" y="670" width="4" height="1" fill="#000"/><rect x="1868" y="672" width="4" height="1" fill="#000"/><text x="1893.5" y="668" font-size="9.5" text-anchor="end" font-family="Liberation Sans" fill="#000" stroke="#000" stroke-width="0.15" letter-spacing="0.3">-33</text><rect x="1868" y="674" width="7" height="1" fill="#000"/><rect x="1868" y="676" width="4" height="1" fill="#000"/><rect x="1868" y="678" width="4" height="1" fill="#000"/><rect x="1868" y="680" width="4" height="1" fill="#000"/><rect x="1868" y="682" width="4" height="1" fill="#000"/><text x="1893.5" y="678" font-size="9.5" text-anchor="end" font-family="Liberation Sans" fill="#000" stroke="#000" stroke-width="0.15" letter-spacing="0.3">-32</text><rect x="1868" y="684" width="7" height="1" fill="#000"/><rect x="1868" y="686" width="4" height="1" fill="#000"/><rect x="1868" y="689" width="4" height="1" fill="#000"/><rect x="1868" y="691" width="4" height="1" fill="#000"/><rect x="1868" y="693" width="4" height="1" fill="#000"/><text x="1893.5" y="688" font-size="9.5" text-anchor="end" font-family="Liberation Sans" fill="#000" stroke="#000" stroke-width="0.15" letter-spacing="0.3">-31</text><rect x="1868" y="695" width="7" height="1" fill="#000"/><rect x="1868" y="697" width="4" height="1" fill="#000"/><rect x="1868" y="699" width="4" height="1" fill="#000"/><rect x="1868" y="701" width="4" height="1" fill="#000"/><rect x="1868" y="703" width="4" height="1" fill="#000"/><text x="1893.5" y="699" font-size="9.5" text-anchor="end" font-family="Liberation Sans" fill="#000" stroke="#000" stroke-width="0.15" letter-spacing="0.3">-30</text><rect x="1868" y="705" width="7" height="1" fill="#000"/><rect x="1868" y="707" width="4" height="1" fill="#000"/><rect x="1868" y="709" width="4" height="1" fill="#000"/><rect x="1868" y="711" width="4" height="1" fill="#000"/><rect x="1868" y="713" width="4" height="1" fill="#000"/><text x="1893.5" y="709" font-size="9.5" text-anchor="end" font-family="Liberation Sans" fill="#000" stroke="#000" stroke-width="0.15" letter-spacing="0.3">-29</text><rect x="1868" y="716" width="7" height="1" fill="#000"/><rect x="1868" y="718" width="4" height="1" fill="#000"/><rect x="1868" y="720" width="4" height="1" fill="#000"/><rect x="1868" y="722" width="4" height="1" fill="#000"/><rect x="1868" y="724" width="4" height="1" fill="#000"/><text x="1893.5" y="720" font-size="9.5" text-anchor="end" font-family="Liberation Sans" fill="#000" stroke="#000" stroke-width="0.15" letter-spacing="0.3">-29</text><rect x="1868" y="726" width="7" height="1" fill="#000"/><rect x="1868" y="728" width="4" height="1" fill="#000"/><rect x="1868" y="730" width="4" height="1" fill="#000"/><rect x="1868" y="732" width="4" height="1" fill="#000"/><rect x="1868" y="734" width="4" height="1" fill="#000"/><text x="1893.5" y="730" font-size="9.5" text-anchor="end" font-family="Liberation Sans" fill="#000" stroke="#000" stroke-width="0.15" letter-spacing="0.3">-28</text><rect x="1868" y="736" width="7" height="1" fill="#000"/><rect x="1868" y="738" width="4" height="1" fill="#000"/><rect x="1868" y="740" width="4" height="1" fill="#000"/><rect x="1868" y="743" width="4" height="1" fill="#000"/><rect x="1868" y="745" width="4" height="1" fill="#000"/><text x="1893.5" y="740" font-size="9.5" text-anchor="end" font-family="Liberation Sans" fill="#000" stroke="#000" stroke-width="0.15" letter-spacing="0.3">-27</text><rect x="1868" y="747" width="7" height="1" fill="#000"/><rect x="1868" y="749" width="4" height="1" fill="#000"/><rect x="1868" y="751" width="4" height="1" fill="#000"/><rect x="1868" y="753" width="4" height="1" fill="#000"/><rect x="1868" y="755" width="4" height="1" fill="#000"/><text x="1893.5" y="751" font-size="9.5" text-anchor="end" font-family="Liberation Sans" fill="#000" stroke="#000" stroke-width="0.15" letter-spacing="0.3">-27</text><rect x="1868" y="757" width="7" height="1" fill="#000"/><rect x="1868" y="759" width="4" height="1" fill="#000"/><rect x="1868" y="761" width="4" height="1" fill="#000"/><rect x="1868" y="763" width="4" height="1" fill="#000"/><rect x="1868" y="765" width="4" height="1" fill="#000"/><text x="1893.5" y="761" font-size="9.5" text-anchor="end" font-family="Liberation Sans" fill="#000" stroke="#000" stroke-width="0.15" letter-spacing="0.3">-26</text><rect x="1868" y="767" width="7" height="1" fill="#000"/><rect x="1868" y="770" width="4" height="1" fill="#000"/><rect x="1868" y="772" width="4" height="1" fill="#000"/><rect x="1868" y="774" width="4" height="1" fill="#000"/><rect x="1868" y="776" width="4" height="1" fill="#000"/><text x="1893.5" y="771" font-size="9.5" text-anchor="end" font-family="Liberation Sans" fill="#000" stroke="#000" stroke-width="0.15" letter-spacing="0.3">-26</text><rect x="1868" y="778" width="7" height="1" fill="#000"/><rect x="1868" y="780" width="4" height="1" fill="#000"/><rect x="1868" y="782" width="4" height="1" fill="#000"/><rect x="1868" y="784" width="4" height="1" fill="#000"/><rect x="1868" y="786" width="4" height="1" fill="#000"/><text x="1893.5" y="782" font-size="9.5" text-anchor="end" font-family="Liberation Sans" fill="#000" stroke="#000" stroke-width="0.15" letter-spacing="0.3">-25</text><rect x="1868" y="788" width="7" height="1" fill="#000"/><rect x="1868" y="790" width="4" height="1" fill="#000"/><rect x="1868" y="792" width="4" height="1" fill="#000"/><rect x="1868" y="794" width="4" height="1" fill="#000"/><rect x="1868" y="797" width="4" height="1" fill="#000"/><text x="1893.5" y="792" font-size="9.5" text-anchor="end" font-family="Liberation Sans" fill="#000" stroke="#000" stroke-width="0.15" letter-spacing="0.3">-25</text><rect x="1868" y="799" width="7" height="1" fill="#000"/><rect x="1868" y="801" width="4" height="1" fill="#000"/><rect x="1868" y="803" width="4" height="1" fill="#000"/><rect x="1868" y="805" width="4" height="1" fill="#000"/><rect x="1868" y="807" width="4" height="1" fill="#000"/><text x="1893.5" y="803" font-size="9.5" text-anchor="end" font-family="Liberation Sans" fill="#000" stroke="#000" stroke-width="0.15" letter-spacing="0.3">-24</text><rect x="1868" y="809" width="7" height="1" fill="#000"/><rect x="1868" y="811" width="4" height="1" fill="#000"/><rect x="1868" y="813" width="4" height="1" fill="#000"/><rect x="1868" y="815" width="4" height="1" fill="#000"/><rect x="1868" y="817" width="4" height="1" fill="#000"/><text x="1893.5" y="813" font-size="9.5" text-anchor="end" font-family="Liberation Sans" fill="#000" stroke="#000" stroke-width="0.15" letter-spacing="0.3">-24</text><rect x="1868" y="819" width="7" height="1" fill="#000"/><rect x="1868" y="821" width="4" height="1" fill="#000"/><rect x="1868" y="824" width="4" height="1" fill="#000"/><rect x="1868" y="826" width="4" height="1" fill="#000"/><rect x="1868" y="828" width="4" height="1" fill="#000"/><text x="1893.5" y="823" font-size="9.5" text-anchor="end" font-family="Liberation Sans" fill="#000" stroke="#000" stroke-width="0.15" letter-spacing="0.3">-23</text><rect x="1868" y="830" width="7" height="1" fill="#000"/><rect x="1868" y="832" width="4" height="1" fill="#000"/><rect x="1868" y="834" width="4" height="1" fill="#000"/><rect x="1868" y="836" width="4" height="1" fill="#000"/><rect x="1868" y="838" width="4" height="1" fill="#000"/><text x="1893.5" y="834" font-size="9.5" text-anchor="end" font-family="Liberation Sans" fill="#000" stroke="#000" stroke-width="0.15" letter-spacing="0.3">-23</text><rect x="1868" y="840" width="7" height="1" fill="#000"/><rect x="1868" y="842" width="4" height="1" fill="#000"/><rect x="1868" y="844" width="4" height="1" fill="#000"/><rect x="1868" y="846" width="4" height="1" fill="#000"/><rect x="1868" y="848" width="4" height="1" fill="#000"/><text x="1893.5" y="844" font-size="9.5" text-anchor="end" font-family="Liberation Sans" fill="#000" stroke="#000" stroke-width="0.15" letter-spacing="0.3">-23</text><rect x="1868" y="851" width="7" height="1" fill="#000"/><rect x="1868" y="853" width="4" height="1" fill="#000"/><rect x="1868" y="855" width="4" height="1" fill="#000"/><rect x="1868" y="857" width="4" height="1" fill="#000"/><rect x="1868" y="859" width="4" height="1" fill="#000"/><text x="1893.5" y="855" font-size="9.5" text-anchor="end" font-family="Liberation Sans" fill="#000" stroke="#000" stroke-width="0.15" letter-spacing="0.3">-22</text><rect x="1868" y="861" width="7" height="1" fill="#000"/><rect x="1868" y="863" width="4" height="1" fill="#000"/><rect x="1868" y="865" width="4" height="1" fill="#000"/><rect x="1868" y="867" width="4" height="1" fill="#000"/><rect x="1868" y="869" width="4" height="1" fill="#000"/><text x="1893.5" y="865" font-size="9.5" text-anchor="end" font-family="Liberation Sans" fill="#000" stroke="#000" stroke-width="0.15" letter-spacing="0.3">-22</text><rect x="1868" y="871" width="7" height="1" fill="#000"/><rect x="1868" y="873" width="4" height="1" fill="#000"/><rect x="1868" y="875" width="4" height="1" fill="#000"/><rect x="1868" y="878" width="4" height="1" fill="#000"/><rect x="1868" y="880" width="4" height="1" fill="#000"/><text x="1893.5" y="875" font-size="9.5" text-anchor="end" font-family="Liberation Sans" fill="#000" stroke="#000" stroke-width="0.15" letter-spacing="0.3">-22</text><rect x="1868" y="882" width="7" height="1" fill="#000"/><rect x="1868" y="884" width="4" height="1" fill="#000"/><rect x="1868" y="886" width="4" height="1" fill="#000"/><rect x="1868" y="888" width="4" height="1" fill="#000"/><rect x="1868" y="890" width="4" height="1" fill="#000"/><text x="1893.5" y="886" font-size="9.5" text-anchor="end" font-family="Liberation Sans" fill="#000" stroke="#000" stroke-width="0.15" letter-spacing="0.3">-21</text><rect x="1868" y="892" width="7" height="1" fill="#000"/><rect x="1868" y="894" width="4" height="1" fill="#000"/><rect x="1868" y="896" width="4" height="1" fill="#000"/><rect x="1868" y="898" width="4" height="1" fill="#000"/><rect x="1868" y="900" width="4" height="1" fill="#000"/><text x="1893.5" y="896" font-size="9.5" text-anchor="end" font-family="Liberation Sans" fill="#000" stroke="#000" stroke-width="0.15" letter-spacing="0.3">-21</text><rect x="1868" y="902" width="7" height="1" fill="#000"/><rect x="1868" y="905" width="4" height="1" fill="#000"/><rect x="1868" y="907" width="4" height="1" fill="#000"/><rect x="1868" y="909" width="4" height="1" fill="#000"/><rect x="1868" y="911" width="4" height="1" fill="#000"/><text x="1893.5" y="906" font-size="9.5" text-anchor="end" font-family="Liberation Sans" fill="#000" stroke="#000" stroke-width="0.15" letter-spacing="0.3">-21</text><rect x="1868" y="913" width="7" height="1" fill="#000"/><rect x="1868" y="915" width="4" height="1" fill="#000"/><rect x="1868" y="917" width="4" height="1" fill="#000"/><rect x="1868" y="919" width="4" height="1" fill="#000"/><rect x="1868" y="921" width="4" height="1" fill="#000"/><text x="1893.5" y="917" font-size="9.5" text-anchor="end" font-family="Liberation Sans" fill="#000" stroke="#000" stroke-width="0.15" letter-spacing="0.3">-20</text><rect x="1868" y="923" width="7" height="1" fill="#000"/><rect x="1868" y="925" width="4" height="1" fill="#000"/><rect x="1868" y="927" width="4" height="1" fill="#000"/><rect x="1868" y="929" width="4" height="1" fill="#000"/><rect x="1868" y="932" width="4" height="1" fill="#000"/><text x="1893.5" y="927" font-size="9.5" text-anchor="end" font-family="Liberation Sans" fill="#000" stroke="#000" stroke-width="0.15" letter-spacing="0.3">-20</text><rect x="1868" y="934" width="7" height="1" fill="#000"/><rect x="1868" y="936" width="4" height="1" fill="#000"/><rect x="1868" y="938" width="4" height="1" fill="#000"/><rect x="1868" y="940" width="4" height="1" fill="#000"/><rect x="1868" y="942" width="4" height="1" fill="#000"/><text x="1893.5" y="938" font-size="9.5" text-anchor="end" font-family="Liberation Sans" fill="#000" stroke="#000" stroke-width="0.15" letter-spacing="0.3">-20</text><rect x="1868" y="944" width="7" height="1" fill="#000"/><rect x="1868" y="946" width="4" height="1" fill="#000"/><rect x="1868" y="948" width="4" height="1" fill="#000"/><rect x="1868" y="950" width="4" height="1" fill="#000"/><rect x="1868" y="952" width="4" height="1" fill="#000"/><text x="1893.5" y="948" font-size="9.5" text-anchor="end" font-family="Liberation Sans" fill="#000" stroke="#000" stroke-width="0.15" letter-spacing="0.3">-20</text><rect x="1868" y="954" width="7" height="1" fill="#000"/><text x="1893.5" y="958" font-size="9.5" text-anchor="end" font-family="Liberation Sans" fill="#000" stroke="#000" stroke-width="0.15" letter-spacing="0.3">-19</text><text x="1877" y="206" font-size="10" font-family="Liberation Sans" fill="#000">dB</text></svg>
<svg class="a" style="left:0;top:969px" width="1903" height="21" viewBox="0 969 1903 21"><rect x="0" y="969" width="1903" height="21" fill="#fff"/><rect x="2" y="970" width="1" height="6" fill="#000"/><rect x="10" y="970" width="1" height="3" fill="#000"/><rect x="18" y="970" width="1" height="3" fill="#000"/><rect x="26" y="970" width="1" height="3" fill="#000"/><rect x="34" y="970" width="1" height="3" fill="#000"/><rect x="42" y="970" width="1" height="4" fill="#000"/><rect x="50" y="970" width="1" height="3" fill="#000"/><rect x="58" y="970" width="1" height="3" fill="#000"/><rect x="66" y="970" width="1" height="3" fill="#000"/><rect x="74" y="970" width="1" height="3" fill="#000"/><rect x="82" y="970" width="1" height="6" fill="#000"/><rect x="90" y="970" width="1" height="3" fill="#000"/><rect x="98" y="970" width="1" height="3" fill="#000"/><rect x="106" y="970" width="1" height="3" fill="#000"/><rect x="114" y="970" width="1" height="3" fill="#000"/><rect x="122" y="970" width="1" height="4" fill="#000"/><rect x="130" y="970" width="1" height="3" fill="#000"/><rect x="138" y="970" width="1" height="3" fill="#000"/><rect x="146" y="970" width="1" height="3" fill="#000"/><rect x="154" y="970" width="1" height="3" fill="#000"/><rect x="162" y="970" width="1" height="6" fill="#000"/><rect x="170" y="970" width="1" height="3" fill="#000"/><rect x="178" y="970" width="1" height="3" fill="#000"/><rect x="186" y="970" width="1" height="3" fill="#000"/><rect x="194" y="970" width="1" height="3" fill="#000"/><rect x="202" y="970" width="1" height="4" fill="#000"/><rect x="210" y="970" width="1" height="3" fill="#000"/><rect x="218" y="970" width="1" height="3" fill="#000"/><rect x="226" y="970" width="1" height="3" fill="#000"/><rect x="234" y="970" width="1" height="3" fill="#000"/><rect x="242" y="970" width="1" height="6" fill="#000"/><rect x="250" y="970" width="1" height="3" fill="#000"/><rect x="258" y="970" width="1" height="3" fill="#000"/><rect x="267" y="970" width="1" height="3" fill="#000"/><rect x="275" y="970" width="1" height="3" fill="#000"/><rect x="283" y="970" width="1" height="4" fill="#000"/><rect x="291" y="970" width="1" height="3" fill="#000"/><rect x="299" y="970" width="1" height="3" fill="#000"/><rect x="307" y="970" width="1" height="3" fill="#000"/><rect x="315" y="970" width="1" height="3" fill="#000"/><rect x="323" y="970" width="1" height="6" fill="#000"/><rect x="331" y="970" width="1" height="3" fill="#000"/><rect x="339" y="970" width="1" height="3" fill="#000"/><rect x="347" y="970" width="1" height="3" fill="#000"/><rect x="355" y="970" width="1" height="3" fill="#000"/><rect x="363" y="970" width="1" height="4" fill="#000"/><rect x="371" y="970" width="1" height="3" fill="#000"/><rect x="379" y="970" width="1" height="3" fill="#000"/><rect x="387" y="970" width="1" height="3" fill="#000"/><rect x="395" y="970" width="1" height="3" fill="#000"/><rect x="403" y="970" width="1" height="6" fill="#000"/><rect x="411" y="970" width="1" height="3" fill="#000"/><rect x="419" y="970" width="1" height="3" fill="#000"/><rect x="427" y="970" width="1" height="3" fill="#000"/><rect x="435" y="970" width="1" height="3" fill="#000"/><rect x="443" y="970" width="1" height="4" fill="#000"/><rect x="451" y="970" width="1" height="3" fill="#000"/><rect x="459" y="970" width="1" height="3" fill="#000"/><rect x="467" y="970" width="1" height="3" fill="#000"/><rect x="475" y="970" width="1" height="3" fill="#000"/><rect x="483" y="970" width="1" height="6" fill="#000"/><rect x="491" y="970" width="1" height="3" fill="#000"/><rect x="499" y="970" width="1" height="3" fill="#000"/><rect x="507" y="970" width="1" height="3" fill="#000"/><rect x="515" y="970" width="1" height="3" fill="#000"/><rect x="523" y="970" width="1" height="4" fill="#000"/><rect x="531" y="970" width="1" height="3" fill="#000"/><rect x="539" y="970" width="1" height="3" fill="#000"/><rect x="547" y="970" width="1" height="3" fill="#000"/><rect x="555" y="970" width="1" height="3" fill="#000"/><rect x="563" y="970" width="1" height="6" fill="#000"/><rect x="571" y="970" width="1" height="3" fill="#000"/><rect x="579" y="970" width="1" height="3" fill="#000"/><rect x="587" y="970" width="1" height="3" fill="#000"/><rect x="595" y="970" width="1" height="3" fill="#000"/><rect x="603" y="970" width="1" height="4" fill="#000"/><rect x="611" y="970" width="1" height="3" fill="#000"/><rect x="619" y="970" width="1" height="3" fill="#000"/><rect x="627" y="970" width="1" height="3" fill="#000"/><rect x="635" y="970" width="1" height="3" fill="#000"/><rect x="643" y="970" width="1" height="6" fill="#000"/><rect x="651" y="970" width="1" height="3" fill="#000"/><rect x="659" y="970" width="1" height="3" fill="#000"/><rect x="667" y="970" width="1" height="3" fill="#000"/><rect x="675" y="970" width="1" height="3" fill="#000"/><rect x="683" y="970" width="1" height="4" fill="#000"/><rect x="691" y="970" width="1" height="3" fill="#000"/><rect x="699" y="970" width="1" height="3" fill="#000"/><rect x="707" y="970" width="1" height="3" fill="#000"/><rect x="715" y="970" width="1" height="3" fill="#000"/><rect x="723" y="970" width="1" height="6" fill="#000"/><rect x="731" y="970" width="1" height="3" fill="#000"/><rect x="739" y="970" width="1" height="3" fill="#000"/><rect x="747" y="970" width="1" height="3" fill="#000"/><rect x="755" y="970" width="1" height="3" fill="#000"/><rect x="763" y="970" width="1" height="4" fill="#000"/><rect x="771" y="970" width="1" height="3" fill="#000"/><rect x="780" y="970" width="1" height="3" fill="#000"/><rect x="788" y="970" width="1" height="3" fill="#000"/><rect x="796" y="970" width="1" height="3" fill="#000"/><rect x="804" y="970" width="1" height="6" fill="#000"/><rect x="812" y="970" width="1" height="3" fill="#000"/><rect x="820" y="970" width="1" height="3" fill="#000"/><rect x="828" y="970" width="1" height="3" fill="#000"/><rect x="836" y="970" width="1" height="3" fill="#000"/><rect x="844" y="970" width="1" height="4" fill="#000"/><rect x="852" y="970" width="1" height="3" fill="#000"/><rect x="860" y="970" width="1" height="3" fill="#000"/><rect x="868" y="970" width="1" height="3" fill="#000"/><rect x="876" y="970" width="1" height="3" fill="#000"/><rect x="884" y="970" width="1" height="6" fill="#000"/><rect x="892" y="970" width="1" height="3" fill="#000"/><rect x="900" y="970" width="1" height="3" fill="#000"/><rect x="908" y="970" width="1" height="3" fill="#000"/><rect x="916" y="970" width="1" height="3" fill="#000"/><rect x="924" y="970" width="1" height="4" fill="#000"/><rect x="932" y="970" width="1" height="3" fill="#000"/><rect x="940" y="970" width="1" height="3" fill="#000"/><rect x="948" y="970" width="1" height="3" fill="#000"/><rect x="956" y="970" width="1" height="3" fill="#000"/><rect x="964" y="970" width="1" height="6" fill="#000"/><rect x="972" y="970" width="1" height="3" fill="#000"/><rect x="980" y="970" width="1" height="3" fill="#000"/><rect x="988" y="970" width="1" height="3" fill="#000"/><rect x="996" y="970" width="1" height="3" fill="#000"/><rect x="1004" y="970" width="1" height="4" fill="#000"/><rect x="1012" y="970" width="1" height="3" fill="#000"/><rect x="1020" y="970" width="1" height="3" fill="#000"/><rect x="1028" y="970" width="1" height="3" fill="#000"/><rect x="1036" y="970" width="1" height="3" fill="#000"/><rect x="1044" y="970" width="1" height="6" fill="#000"/><rect x="1052" y="970" width="1" height="3" fill="#000"/><rect x="1060" y="970" width="1" height="3" fill="#000"/><rect x="1068" y="970" width="1" height="3" fill="#000"/><rect x="1076" y="970" width="1" height="3" fill="#000"/><rect x="1084" y="970" width="1" height="4" fill="#000"/><rect x="1092" y="970" width="1" height="3" fill="#000"/><rect x="1100" y="970" width="1" height="3" fill="#000"/><rect x="1108" y="970" width="1" height="3" fill="#000"/><rect x="1116" y="970" width="1" height="3" fill="#000"/><rect x="1124" y="970" width="1" height="6" fill="#000"/><rect x="1132" y="970" width="1" height="3" fill="#000"/><rect x="1140" y="970" width="1" height="3" fill="#000"/><rect x="1148" y="970" width="1" height="3" fill="#000"/><rect x="1156" y="970" width="1" height="3" fill="#000"/><rect x="1164" y="970" width="1" height="4" fill="#000"/><rect x="1172" y="970" width="1" height="3" fill="#000"/><rect x="1180" y="970" width="1" height="3" fill="#000"/><rect x="1188" y="970" width="1" height="3" fill="#000"/><rect x="1196" y="970" width="1" height="3" fill="#000"/><rect x="1204" y="970" width="1" height="6" fill="#000"/><rect x="1212" y="970" width="1" height="3" fill="#000"/><rect x="1220" y="970" width="1" height="3" fill="#000"/><rect x="1228" y="970" width="1" height="3" fill="#000"/><rect x="1236" y="970" width="1" height="3" fill="#000"/><rect x="1244" y="970" width="1" height="4" fill="#000"/><rect x="1252" y="970" width="1" height="3" fill="#000"/><rect x="1260" y="970" width="1" height="3" fill="#000"/><rect x="1268" y="970" width="1" height="3" fill="#000"/><rect x="1276" y="970" width="1" height="3" fill="#000"/><rect x="1284" y="970" width="1" height="6" fill="#000"/><rect x="1292" y="970" width="1" height="3" fill="#000"/><rect x="1301" y="970" width="1" height="3" fill="#000"/><rect x="1309" y="970" width="1" height="3" fill="#000"/><rect x="1317" y="970" width="1" height="3" fill="#000"/><rect x="1325" y="970" width="1" height="4" fill="#000"/><rect x="1333" y="970" width="1" height="3" fill="#000"/><rect x="1341" y="970" width="1" height="3" fill="#000"/><rect x="1349" y="970" width="1" height="3" fill="#000"/><rect x="1357" y="970" width="1" height="3" fill="#000"/><rect x="1365" y="970" width="1" height="6" fill="#000"/><rect x="1373" y="970" width="1" height="3" fill="#000"/><rect x="1381" y="970" width="1" height="3" fill="#000"/><rect x="1389" y="970" width="1" height="3" fill="#000"/><rect x="1397" y="970" width="1" height="3" fill="#000"/><rect x="1405" y="970" width="1" height="4" fill="#000"/><rect x="1413" y="970" width="1" height="3" fill="#000"/><rect x="1421" y="970" width="1" height="3" fill="#000"/><rect x="1429" y="970" width="1" height="3" fill="#000"/><rect x="1437" y="970" width="1" height="3" fill="#000"/><rect x="1445" y="970" width="1" height="6" fill="#000"/><rect x="1453" y="970" width="1" height="3" fill="#000"/><rect x="1461" y="970" width="1" height="3" fill="#000"/><rect x="1469" y="970" width="1" height="3" fill="#000"/><rect x="1477" y="970" width="1" height="3" fill="#000"/><rect x="1485" y="970" width="1" height="4" fill="#000"/><rect x="1493" y="970" width="1" height="3" fill="#000"/><rect x="1501" y="970" width="1" height="3" fill="#000"/><rect x="1509" y="970" width="1" height="3" fill="#000"/><rect x="1517" y="970" width="1" height="3" fill="#000"/><rect x="1525" y="970" width="1" height="6" fill="#000"/><rect x="1533" y="970" width="1" height="3" fill="#000"/><rect x="1541" y="970" width="1" height="3" fill="#000"/><rect x="1549" y="970" width="1" height="3" fill="#000"/><rect x="1557" y="970" width="1" height="3" fill="#000"/><rect x="1565" y="970" width="1" height="4" fill="#000"/><rect x="1573" y="970" width="1" height="3" fill="#000"/><rect x="1581" y="970" width="1" height="3" fill="#000"/><rect x="1589" y="970" width="1" height="3" fill="#000"/><rect x="1597" y="970" width="1" height="3" fill="#000"/><rect x="1605" y="970" width="1" height="6" fill="#000"/><rect x="1613" y="970" width="1" height="3" fill="#000"/><rect x="1621" y="970" width="1" height="3" fill="#000"/><rect x="1629" y="970" width="1" height="3" fill="#000"/><rect x="1637" y="970" width="1" height="3" fill="#000"/><rect x="1645" y="970" width="1" height="4" fill="#000"/><rect x="1653" y="970" width="1" height="3" fill="#000"/><rect x="1661" y="970" width="1" height="3" fill="#000"/><rect x="1669" y="970" width="1" height="3" fill="#000"/><rect x="1677" y="970" width="1" height="3" fill="#000"/><rect x="1685" y="970" width="1" height="6" fill="#000"/><rect x="1693" y="970" width="1" height="3" fill="#000"/><rect x="1701" y="970" width="1" height="3" fill="#000"/><rect x="1709" y="970" width="1" height="3" fill="#000"/><rect x="1717" y="970" width="1" height="3" fill="#000"/><rect x="1725" y="970" width="1" height="4" fill="#000"/><rect x="1733" y="970" width="1" height="3" fill="#000"/><rect x="1741" y="970" width="1" height="3" fill="#000"/><rect x="1749" y="970" width="1" height="3" fill="#000"/><rect x="1757" y="970" width="1" height="3" fill="#000"/><rect x="1765" y="970" width="1" height="6" fill="#000"/><rect x="1773" y="970" width="1" height="3" fill="#000"/><rect x="1781" y="970" width="1" height="3" fill="#000"/><rect x="1789" y="970" width="1" height="3" fill="#000"/><rect x="1797" y="970" width="1" height="3" fill="#000"/><rect x="1805" y="970" width="1" height="4" fill="#000"/><rect x="1814" y="970" width="1" height="3" fill="#000"/><rect x="1822" y="970" width="1" height="3" fill="#000"/><rect x="1830" y="970" width="1" height="3" fill="#000"/><rect x="1838" y="970" width="1" height="3" fill="#000"/><rect x="1846" y="970" width="1" height="6" fill="#000"/><rect x="1854" y="970" width="1" height="3" fill="#000"/><rect x="1862" y="970" width="1" height="3" fill="#000"/><text x="3" y="985.8" font-size="9.5" font-family="Liberation Sans" fill="#000" stroke="#000" stroke-width="0.3">smpl</text><text x="41.3" y="985.8" font-size="9.2" text-anchor="middle" font-family="Liberation Sans" fill="#000" stroke="#000" stroke-width="0.3">125</text><text x="81.4" y="985.8" font-size="9.2" text-anchor="middle" font-family="Liberation Sans" fill="#000" stroke="#000" stroke-width="0.3">250</text><text x="121.4" y="985.8" font-size="9.2" text-anchor="middle" font-family="Liberation Sans" fill="#000" stroke="#000" stroke-width="0.3">375</text><text x="161.5" y="985.8" font-size="9.2" text-anchor="middle" font-family="Liberation Sans" fill="#000" stroke="#000" stroke-width="0.3">500</text><text x="201.6" y="985.8" font-size="9.2" text-anchor="middle" font-family="Liberation Sans" fill="#000" stroke="#000" stroke-width="0.3">625</text><text x="241.7" y="985.8" font-size="9.2" text-anchor="middle" font-family="Liberation Sans" fill="#000" stroke="#000" stroke-width="0.3">750</text><text x="281.7" y="985.8" font-size="9.2" text-anchor="middle" font-family="Liberation Sans" fill="#000" stroke="#000" stroke-width="0.3">875</text><text x="321.8" y="985.8" font-size="9.2" text-anchor="middle" font-family="Liberation Sans" fill="#000" stroke="#000" stroke-width="0.3">1000</text><text x="361.9" y="985.8" font-size="9.2" text-anchor="middle" font-family="Liberation Sans" fill="#000" stroke="#000" stroke-width="0.3">1125</text><text x="402.0" y="985.8" font-size="9.2" text-anchor="middle" font-family="Liberation Sans" fill="#000" stroke="#000" stroke-width="0.3">1250</text><text x="442.0" y="985.8" font-size="9.2" text-anchor="middle" font-family="Liberation Sans" fill="#000" stroke="#000" stroke-width="0.3">1375</text><text x="482.1" y="985.8" font-size="9.2" text-anchor="middle" font-family="Liberation Sans" fill="#000" stroke="#000" stroke-width="0.3">1500</text><text x="522.2" y="985.8" font-size="9.2" text-anchor="middle" font-family="Liberation Sans" fill="#000" stroke="#000" stroke-width="0.3">1625</text><text x="562.3" y="985.8" font-size="9.2" text-anchor="middle" font-family="Liberation Sans" fill="#000" stroke="#000" stroke-width="0.3">1750</text><text x="602.4" y="985.8" font-size="9.2" text-anchor="middle" font-family="Liberation Sans" fill="#000" stroke="#000" stroke-width="0.3">1875</text><text x="642.4" y="985.8" font-size="9.2" text-anchor="middle" font-family="Liberation Sans" fill="#000" stroke="#000" stroke-width="0.3">2000</text><text x="682.5" y="985.8" font-size="9.2" text-anchor="middle" font-family="Liberation Sans" fill="#000" stroke="#000" stroke-width="0.3">2125</text><text x="722.6" y="985.8" font-size="9.2" text-anchor="middle" font-family="Liberation Sans" fill="#000" stroke="#000" stroke-width="0.3">2250</text><text x="762.7" y="985.8" font-size="9.2" text-anchor="middle" font-family="Liberation Sans" fill="#000" stroke="#000" stroke-width="0.3">2375</text><text x="802.7" y="985.8" font-size="9.2" text-anchor="middle" font-family="Liberation Sans" fill="#000" stroke="#000" stroke-width="0.3">2500</text><text x="842.8" y="985.8" font-size="9.2" text-anchor="middle" font-family="Liberation Sans" fill="#000" stroke="#000" stroke-width="0.3">2625</text><text x="882.9" y="985.8" font-size="9.2" text-anchor="middle" font-family="Liberation Sans" fill="#000" stroke="#000" stroke-width="0.3">2750</text><text x="923.0" y="985.8" font-size="9.2" text-anchor="middle" font-family="Liberation Sans" fill="#000" stroke="#000" stroke-width="0.3">2875</text><text x="963.0" y="985.8" font-size="9.2" text-anchor="middle" font-family="Liberation Sans" fill="#000" stroke="#000" stroke-width="0.3">3000</text><text x="1003.1" y="985.8" font-size="9.2" text-anchor="middle" font-family="Liberation Sans" fill="#000" stroke="#000" stroke-width="0.3">3125</text><text x="1043.2" y="985.8" font-size="9.2" text-anchor="middle" font-family="Liberation Sans" fill="#000" stroke="#000" stroke-width="0.3">3250</text><text x="1083.3" y="985.8" font-size="9.2" text-anchor="middle" font-family="Liberation Sans" fill="#000" stroke="#000" stroke-width="0.3">3375</text><text x="1123.4" y="985.8" font-size="9.2" text-anchor="middle" font-family="Liberation Sans" fill="#000" stroke="#000" stroke-width="0.3">3500</text><text x="1163.4" y="985.8" font-size="9.2" text-anchor="middle" font-family="Liberation Sans" fill="#000" stroke="#000" stroke-width="0.3">3625</text><text x="1203.5" y="985.8" font-size="9.2" text-anchor="middle" font-family="Liberation Sans" fill="#000" stroke="#000" stroke-width="0.3">3750</text><text x="1243.6" y="985.8" font-size="9.2" text-anchor="middle" font-family="Liberation Sans" fill="#000" stroke="#000" stroke-width="0.3">3875</text><text x="1283.7" y="985.8" font-size="9.2" text-anchor="middle" font-family="Liberation Sans" fill="#000" stroke="#000" stroke-width="0.3">4000</text><text x="1323.7" y="985.8" font-size="9.2" text-anchor="middle" font-family="Liberation Sans" fill="#000" stroke="#000" stroke-width="0.3">4125</text><text x="1363.8" y="985.8" font-size="9.2" text-anchor="middle" font-family="Liberation Sans" fill="#000" stroke="#000" stroke-width="0.3">4250</text><text x="1403.9" y="985.8" font-size="9.2" text-anchor="middle" font-family="Liberation Sans" fill="#000" stroke="#000" stroke-width="0.3">4375</text><text x="1444.0" y="985.8" font-size="9.2" text-anchor="middle" font-family="Liberation Sans" fill="#000" stroke="#000" stroke-width="0.3">4500</text><text x="1484.0" y="985.8" font-size="9.2" text-anchor="middle" font-family="Liberation Sans" fill="#000" stroke="#000" stroke-width="0.3">4625</text><text x="1524.1" y="985.8" font-size="9.2" text-anchor="middle" font-family="Liberation Sans" fill="#000" stroke="#000" stroke-width="0.3">4750</text><text x="1564.2" y="985.8" font-size="9.2" text-anchor="middle" font-family="Liberation Sans" fill="#000" stroke="#000" stroke-width="0.3">4875</text><text x="1604.3" y="985.8" font-size="9.2" text-anchor="middle" font-family="Liberation Sans" fill="#000" stroke="#000" stroke-width="0.3">5000</text><text x="1644.4" y="985.8" font-size="9.2" text-anchor="middle" font-family="Liberation Sans" fill="#000" stroke="#000" stroke-width="0.3">5125</text><text x="1684.4" y="985.8" font-size="9.2" text-anchor="middle" font-family="Liberation Sans" fill="#000" stroke="#000" stroke-width="0.3">5250</text><text x="1724.5" y="985.8" font-size="9.2" text-anchor="middle" font-family="Liberation Sans" fill="#000" stroke="#000" stroke-width="0.3">5375</text><text x="1764.6" y="985.8" font-size="9.2" text-anchor="middle" font-family="Liberation Sans" fill="#000" stroke="#000" stroke-width="0.3">5500</text><text x="1804.7" y="985.8" font-size="9.2" text-anchor="middle" font-family="Liberation Sans" fill="#000" stroke="#000" stroke-width="0.3">5625</text><text x="1844.7" y="985.8" font-size="9.2" text-anchor="middle" font-family="Liberation Sans" fill="#000" stroke="#000" stroke-width="0.3">5750</text></svg>
<div class="a" style="left:1903px;top:196px;width:17px;height:794px;background:#000"></div>
<div class="a" style="left:0;top:990px;width:1920px;height:12px;background:linear-gradient(#f0f1f4,#fafbfc)"></div>
<div class="a" style="left:1px;top:991px;width:19px;height:11px;border:1px solid #9da3ab;border-radius:2px;background:linear-gradient(#f6f7f9 0,#f0f2f5 40%,#c9ced8 45%,#d8dce3)"></div>
<svg class="a" style="left:8px;top:993px" width="5" height="8" viewBox="0 0 5 8"><path d="M1 4 L3.5 1.5 V6.5Z" fill="#222"/><rect x="2.5" y="1" width="1.2" height="6.5" fill="#222"/></svg>
<div class="a" style="left:22px;top:991px;width:20px;height:11px;border:1px solid #9da3ab;border-radius:2px;background:linear-gradient(#f6f7f9 0,#f0f2f5 40%,#c9ced8 45%,#d8dce3)"></div>
<div class="a" style="left:28px;top:993px;width:8px;height:6px;background:repeating-linear-gradient(90deg,#555 0,#555 1px,transparent 1px,transparent 2px)"></div>
<div class="a" style="left:1899px;top:991px;width:20px;height:11px;border:1px solid #9da3ab;border-radius:2px;background:linear-gradient(#f6f7f9 0,#f0f2f5 40%,#c9ced8 45%,#d8dce3)"></div>
<svg class="a" style="left:1907px;top:993px" width="5" height="8" viewBox="0 0 5 8"><path d="M4 4 L1.5 1.5 V6.5Z" fill="#222"/><rect x="1.3" y="1" width="1.2" height="6.5" fill="#222"/></svg>
<div class="a" style="left:0;top:1002px;width:1920px;height:12px;background:linear-gradient(#f0f1f4,#fafbfc)"></div>
<div class="a" style="left:1px;top:1003px;width:19px;height:11px;border:1px solid #9da3ab;border-radius:2px;background:linear-gradient(#f6f7f9 0,#f0f2f5 40%,#c9ced8 45%,#d8dce3)"></div>
<svg class="a" style="left:8px;top:1005px" width="5" height="8" viewBox="0 0 5 8"><path d="M1 4 L3.5 1.5 V6.5Z" fill="#222"/><rect x="2.5" y="1" width="1.2" height="6.5" fill="#222"/></svg>
<div class="a" style="left:22px;top:1003px;width:20px;height:11px;border:1px solid #9da3ab;border-radius:2px;background:linear-gradient(#f6f7f9 0,#f0f2f5 40%,#c9ced8 45%,#d8dce3)"></div>
<div class="a" style="left:28px;top:1005px;width:8px;height:6px;background:repeating-linear-gradient(90deg,#555 0,#555 1px,transparent 1px,transparent 2px)"></div>
<div class="a" style="left:1899px;top:1003px;width:20px;height:11px;border:1px solid #9da3ab;border-radius:2px;background:linear-gradient(#f6f7f9 0,#f0f2f5 40%,#c9ced8 45%,#d8dce3)"></div>
<svg class="a" style="left:1907px;top:1005px" width="5" height="8" viewBox="0 0 5 8"><path d="M4 4 L1.5 1.5 V6.5Z" fill="#222"/><rect x="1.3" y="1" width="1.2" height="6.5" fill="#222"/></svg>
<div class="a" style="left:0;top:1013px;width:1920px;height:1px;background:#d8dbe0"></div>
<div class="a" style="left:0;top:1014px;width:1920px;height:33px;background:linear-gradient(#ffffff 0,#ffffff 1px,#eeeef0 2px,#e6e7e9 12px,#dadbdd 24px,#c9cbce 31px,#e4e6ee 32px)"></div>
<svg class="a" style="left:7.9px;top:1018px" width="21" height="21" viewBox="0 0 21 21"><circle cx="10.5" cy="10.5" r="9.3" fill="url(#bg)" stroke="#a8a8a8" stroke-width="2.2"/><rect x="6" y="6" width="2" height="9" fill="#6a6a6a"/><path d="M15 6 V15 L8.5 10.5Z" fill="#6a6a6a"/></svg>
<svg class="a" style="left:31.8px;top:1018px" width="21" height="21" viewBox="0 0 21 21"><circle cx="10.5" cy="10.5" r="9.3" fill="url(#bg)" stroke="#a8a8a8" stroke-width="2.2"/><path d="M10 6 V15 L4 10.5Z M16 6 V15 L10 10.5Z" fill="#6a6a6a"/></svg>
<svg class="a" style="left:63.9px;top:1018px" width="21" height="21" viewBox="0 0 21 21"><circle cx="10.5" cy="10.5" r="9.3" fill="url(#bg)" stroke="#a8a8a8" stroke-width="2.2"/><rect x="6.5" y="6.5" width="8" height="8" fill="#6a6a6a"/></svg>
<svg class="a" style="left:87.9px;top:1018px" width="21" height="21" viewBox="0 0 21 21"><circle cx="10.5" cy="10.5" r="9.3" fill="url(#bg)" stroke="#a8a8a8" stroke-width="2.2"/><path d="M8 5.5 V15.5 L14 10.5Z" fill="#6a6a6a"/></svg>
<svg class="a" style="left:112.0px;top:1018px" width="21" height="21" viewBox="0 0 21 21"><circle cx="10.5" cy="10.5" r="9.3" fill="url(#bg)" stroke="#a8a8a8" stroke-width="2.2"/><path d="M6 9 H14 L12 7 M15 12 H7 L9 14" stroke="#6a6a6a" stroke-width="1.6" fill="none"/></svg>
<svg class="a" style="left:136.1px;top:1018px" width="21" height="21" viewBox="0 0 21 21"><circle cx="10.5" cy="10.5" r="9.3" fill="url(#bg)" stroke="#a8a8a8" stroke-width="2.2"/><path d="M5 8.5 H10 V5.5 L16 10.5 L10 15.5 V12.5 H5Z" fill="#6a6a6a"/></svg>
<svg class="a" style="left:160.1px;top:1018px" width="21" height="21" viewBox="0 0 21 21"><circle cx="10.5" cy="10.5" r="9.3" fill="url(#bg)" stroke="#a8a8a8" stroke-width="2.2"/><rect x="7" y="6" width="2.4" height="9" fill="#6a6a6a"/><rect x="11.6" y="6" width="2.4" height="9" fill="#6a6a6a"/></svg>
<svg class="a" style="left:192.2px;top:1018px" width="21" height="21" viewBox="0 0 21 21"><circle cx="10.5" cy="10.5" r="9.3" fill="url(#bg)" stroke="#a8a8a8" stroke-width="2.2"/><path d="M5 6 V15 L11 10.5Z M11 6 V15 L17 10.5Z" fill="#6a6a6a"/></svg>
<svg class="a" style="left:216.0px;top:1018px" width="21" height="21" viewBox="0 0 21 21"><circle cx="10.5" cy="10.5" r="9.3" fill="url(#bg)" stroke="#a8a8a8" stroke-width="2.2"/><path d="M6 6 V15 L12.5 10.5Z" fill="#6a6a6a"/><rect x="13" y="6" width="2" height="9" fill="#6a6a6a"/></svg>
<svg class="a" style="left:247.9px;top:1018px" width="21" height="21" viewBox="0 0 21 21"><circle cx="10.5" cy="10.5" r="9.3" fill="url(#bg)" stroke="#a8a8a8" stroke-width="2.2"/><text x="10.5" y="14.5" font-size="11" font-weight="bold" text-anchor="middle" font-family="Liberation Sans" fill="#6a6a6a">R</text></svg>
<svg width="0" height="0" style="position:absolute"><defs><linearGradient id="bg" x1="0" y1="0" x2="0" y2="1"><stop offset="0" stop-color="#fdfdfd"/><stop offset="1" stop-color="#dcdcdc"/></linearGradient></defs></svg>
<div class="t" style="left:281px;top:1025px;font-size:10px;font-weight:bold;color:#7e7e7e">Selection</div>
<div class="t" style="left:516px;top:1025px;font-size:10px;font-weight:bold;color:#7e7e7e">Length</div>
<div class="a" style="left:339px;top:1019px;width:165px;height:23px;border-radius:3px;background:#dfe0e2"></div>
<div class="a" style="left:341px;top:1021px;width:161px;height:19px;border-radius:3px;background:#3f4346"></div>
<div class="t" style="left:343px;top:1024px;font-size:12.5px;font-weight:bold;font-style:italic;color:#fff">0:00:00.000</div>
<div class="t" style="left:499px;top:1024px;font-size:12.5px;font-weight:bold;font-style:italic;color:#fff;transform:translateX(-100%)">0:00:00.000</div>
<div class="a" style="left:564px;top:1019px;width:165px;height:23px;border-radius:3px;background:#dfe0e2"></div>
<div class="a" style="left:566px;top:1021px;width:161px;height:19px;border-radius:3px;background:#3f4346"></div>
<div class="t" style="left:568px;top:1024px;font-size:12.5px;font-weight:bold;font-style:italic;color:#fff">0:00:00.000</div>
<div class="t" style="left:724px;top:1024px;font-size:12.5px;font-weight:bold;font-style:italic;color:#fff;transform:translateX(-100%)">0:01:07.516</div>
<svg class="a" style="left:1791px;top:1022px" width="16" height="17" viewBox="0 0 16 17"><circle cx="6" cy="6.5" r="5" fill="#e4eaf2" stroke="#7b8593" stroke-width="1.1"/><path d="M9.5 10 L13.5 14.5" stroke="#3a3d42" stroke-width="2.4"/><path d="M11 1.5 V8.5 M7.5 5 H14.5" stroke="#2a7ad2" stroke-width="2.2"/></svg>
<svg class="a" style="left:1813px;top:1022px" width="16" height="17" viewBox="0 0 16 17"><circle cx="6" cy="6.5" r="5" fill="#e4eaf2" stroke="#7b8593" stroke-width="1.1"/><path d="M9.5 10 L13.5 14.5" stroke="#3a3d42" stroke-width="2.4"/><path d="M7.5 5 H14.5" stroke="#2a7ad2" stroke-width="2.2"/></svg>
<svg class="a" style="left:1835px;top:1022px" width="16" height="17" viewBox="0 0 16 17"><circle cx="6" cy="6.5" r="5" fill="#e4eaf2" stroke="#7b8593" stroke-width="1.1"/><path d="M9.5 10 L13.5 14.5" stroke="#3a3d42" stroke-width="2.4"/><rect x="1" y="0.5" width="14" height="15" fill="none" stroke="#2a7ad2" stroke-dasharray="2 1.5"/></svg>
<svg class="a" style="left:1857px;top:1022px" width="16" height="17" viewBox="0 0 16 17"><circle cx="6" cy="6.5" r="5" fill="#e4eaf2" stroke="#7b8593" stroke-width="1.1"/><path d="M9.5 10 L13.5 14.5" stroke="#3a3d42" stroke-width="2.4"/><path d="M3 6.5 H8" stroke="#2a7ad2" stroke-width="2"/><path d="M11 1 L15 5 L11 9 L7 5Z" fill="#2a7ad2"/></svg>
<svg class="a" style="left:1879px;top:1022px" width="16" height="17" viewBox="0 0 16 17"><circle cx="6" cy="6.5" r="5" fill="#e4eaf2" stroke="#7b8593" stroke-width="1.1"/><path d="M9.5 10 L13.5 14.5" stroke="#3a3d42" stroke-width="2.4"/><path d="M6 3.5 V9.5 M3 6.5 H9" stroke="#1a3a8a" stroke-width="2"/><path d="M13 1 V15 M11 3 L13 0.5 L15 3 M11 13 L13 15.5 L15 13" stroke="#2a7ad2" stroke-width="1.8" fill="none"/></svg>
<svg class="a" style="left:1901px;top:1022px" width="16" height="17" viewBox="0 0 16 17"><circle cx="6" cy="6.5" r="5" fill="#e4eaf2" stroke="#7b8593" stroke-width="1.1"/><path d="M9.5 10 L13.5 14.5" stroke="#3a3d42" stroke-width="2.4"/><path d="M3 6.5 H9" stroke="#1a3a8a" stroke-width="2"/><path d="M13 1 V15 M11 3 L13 0.5 L15 3 M11 13 L13 15.5 L15 13" stroke="#2a7ad2" stroke-width="1.8" fill="none"/></svg>
<div class="a" style="left:0;top:1047px;width:1920px;height:33px;background:linear-gradient(#7c7f8c 0,#7c7f8c 1px,#fbfbfd 1px,#f4f4f8 3px,#9c9fb5 5px,#a9acbf 10px,#c4c8d2 19px,#dcdddd 25px,#e6e9e6 30px,#a2a4b4 32px,#8a8ca0 33px)"></div>
<div class="a" style="left:0;top:1047px;width:116px;height:33px;border-radius:0 6px 6px 0/0 17px 17px 0;background:linear-gradient(#1f6a1f 0,#1f6a1f 1px,#8ad27e 2px,#b8e8a8 5px,#8ccf7e 9px,#5fae52 14px,#4f9f44 22px,#3f9038 30px,#2f7f2a 33px);box-shadow:inset -5px 0 3px -2px #1a7a1a, inset -1px 0 0 #135213"></div>
<svg class="a" style="left:9px;top:1055px" width="20" height="19" viewBox="0 0 20 19"><path d="M2 3 Q5 1 9 3 V9 Q5 7 2 9Z" fill="#f05a22"/><path d="M10 3 Q14 5 18 3 V9 Q14 11 10 9Z" fill="#7cbb2a"/><path d="M1 10 Q5 8 9 10 V16 Q5 14 1 16Z" fill="#2a7ae0"/><path d="M10 10 Q14 12 18 10 V16 Q14 18 10 16Z" fill="#f8c418"/></svg>
<div class="t" style="left:36px;top:1053px;font-size:24px;line-height:normal;font-weight:bold;font-style:italic;color:#fff;text-shadow:1px 1px 1px #1b4d1a">Start</div>
<div class="a" style="left:125px;top:1050px;width:157px;height:29px;border-radius:3px;background:linear-gradient(#6c7684,#7e8794 50%,#8c95a0);border:1px solid #5a6370;box-shadow:inset 1px 1px 1px #545c67"></div>
<svg class="a" style="left:135px;top:1056px" width="16" height="16" viewBox="0 0 16 16"><circle cx="8" cy="8" r="7" fill="#1a66c8"/><circle cx="8" cy="8" r="6" fill="#3c8ae6"/><path d="M6 4 L12 8 L6 12Z" fill="#fff"/></svg>
<div class="t" style="left:154px;top:1057px;font-size:16px;color:#f2f4f6">Power Sound ...</div>
<div class="a" style="left:286px;top:1050px;width:157px;height:29px;border-radius:3px;background:linear-gradient(#ffffff,#f0f0f5 40%,#d9dbe6);border:1px solid #7f8390"></div>
<svg class="a" style="left:293px;top:1055px" width="16" height="18" viewBox="0 0 16 18"><rect x="1" y="1" width="12" height="15" fill="#fff" stroke="#222"/><rect x="2" y="2" width="10" height="8" fill="#3a66c8"/><path d="M4 13 L14 4" stroke="#c02040" stroke-width="1.6"/></svg>
<div class="t" style="left:313px;top:1057px;font-size:16px;color:#3a3d44">Unbenannt (8...</div>
<div class="a" style="left:1673px;top:1056px;width:13px;height:16px;background:#c4c6cf"></div>
<div class="t" style="left:1673px;top:1058px;font-size:11px;color:#111;transform:scaleX(0.85);transform-origin:0 0">DE</div>
<div class="a" style="left:1699px;top:1047px;width:221px;height:33px;background:linear-gradient(#f7f7fa 0,#e9eaf0 8px,#dcdde6 20px,#cfd1dc 33px);border-left:1px solid #8c90a3"></div>
<svg class="a" style="left:1709px;top:1055px" width="17" height="17" viewBox="0 0 17 17"><rect x="1" y="1" width="15" height="15" rx="2" fill="#f07a22" stroke="#c04a10"/><path d="M4 12 H13 M6 9 Q8 5 11 4" stroke="#fff" stroke-width="1.6" fill="none"/></svg>
<svg class="a" style="left:1728px;top:1055px" width="17" height="17" viewBox="0 0 17 17"><path d="M8.5 1 L15 3 V9 Q15 14 8.5 16 Q2 14 2 9 V3Z" fill="#f2d22a" stroke="#777"/><rect x="7.6" y="4" width="1.8" height="6" fill="#222"/><rect x="7.6" y="11" width="1.8" height="2" fill="#222"/></svg>
<svg class="a" style="left:1746px;top:1055px" width="17" height="17" viewBox="0 0 17 17"><rect x="0" y="3" width="17" height="11" fill="#e02a1a"/><text x="8.5" y="12" font-size="9" font-weight="bold" font-style="italic" text-anchor="middle" fill="#fff" font-family="Liberation Sans">ATI</text></svg>
<svg class="a" style="left:1764px;top:1055px" width="17" height="17" viewBox="0 0 17 17"><path d="M2 6 H5 L10 2 V15 L5 11 H2Z" fill="#c8501a" stroke="#333"/><path d="M12 5 Q14 8.5 12 12 M14 3 Q17 8.5 14 14" stroke="#333" fill="none"/></svg>
<svg class="a" style="left:1783px;top:1055px" width="17" height="17" viewBox="0 0 17 17"><rect x="1" y="5" width="8" height="6" fill="#6aa6e0" stroke="#3a6aa0"/><rect x="2" y="12" width="7" height="2" fill="#9ab"/><path d="M11 5 Q13 3 11 1 M13 7 Q16 4 13 1" stroke="#3ac03a" fill="none"/></svg>
<svg class="a" style="left:1801px;top:1055px" width="17" height="17" viewBox="0 0 17 17"><rect x="5" y="1" width="8" height="6" fill="#3a4a8a"/><rect x="2" y="5" width="8" height="6" fill="#5a6ab0"/><path d="M9 9 L16 16 M16 9 L9 16" stroke="#e02a2a" stroke-width="2"/></svg>
<svg class="a" style="left:1818px;top:1055px" width="17" height="17" viewBox="0 0 17 17"><rect x="5" y="2" width="11" height="12" fill="#fff" stroke="#333"/><rect x="5" y="2" width="11" height="3" fill="#2a5ad0"/><rect x="1" y="9" width="6" height="6" fill="#222"/><path d="M2 9 V7 Q4 4 6 7 V9" stroke="#222" fill="none"/></svg>
<svg class="a" style="left:1836px;top:1055px" width="17" height="17" viewBox="0 0 17 17"><circle cx="8.5" cy="8.5" r="7.5" fill="#f8d81a" stroke="#8a7a10"/><circle cx="6" cy="7" r="1" fill="#222"/><circle cx="11" cy="7" r="1" fill="#222"/><path d="M5 11.5 H12" stroke="#222"/></svg>
<div class="t" style="left:1862px;top:1054px;font-size:17px;color:#222">22:17</div>
</body></html>
